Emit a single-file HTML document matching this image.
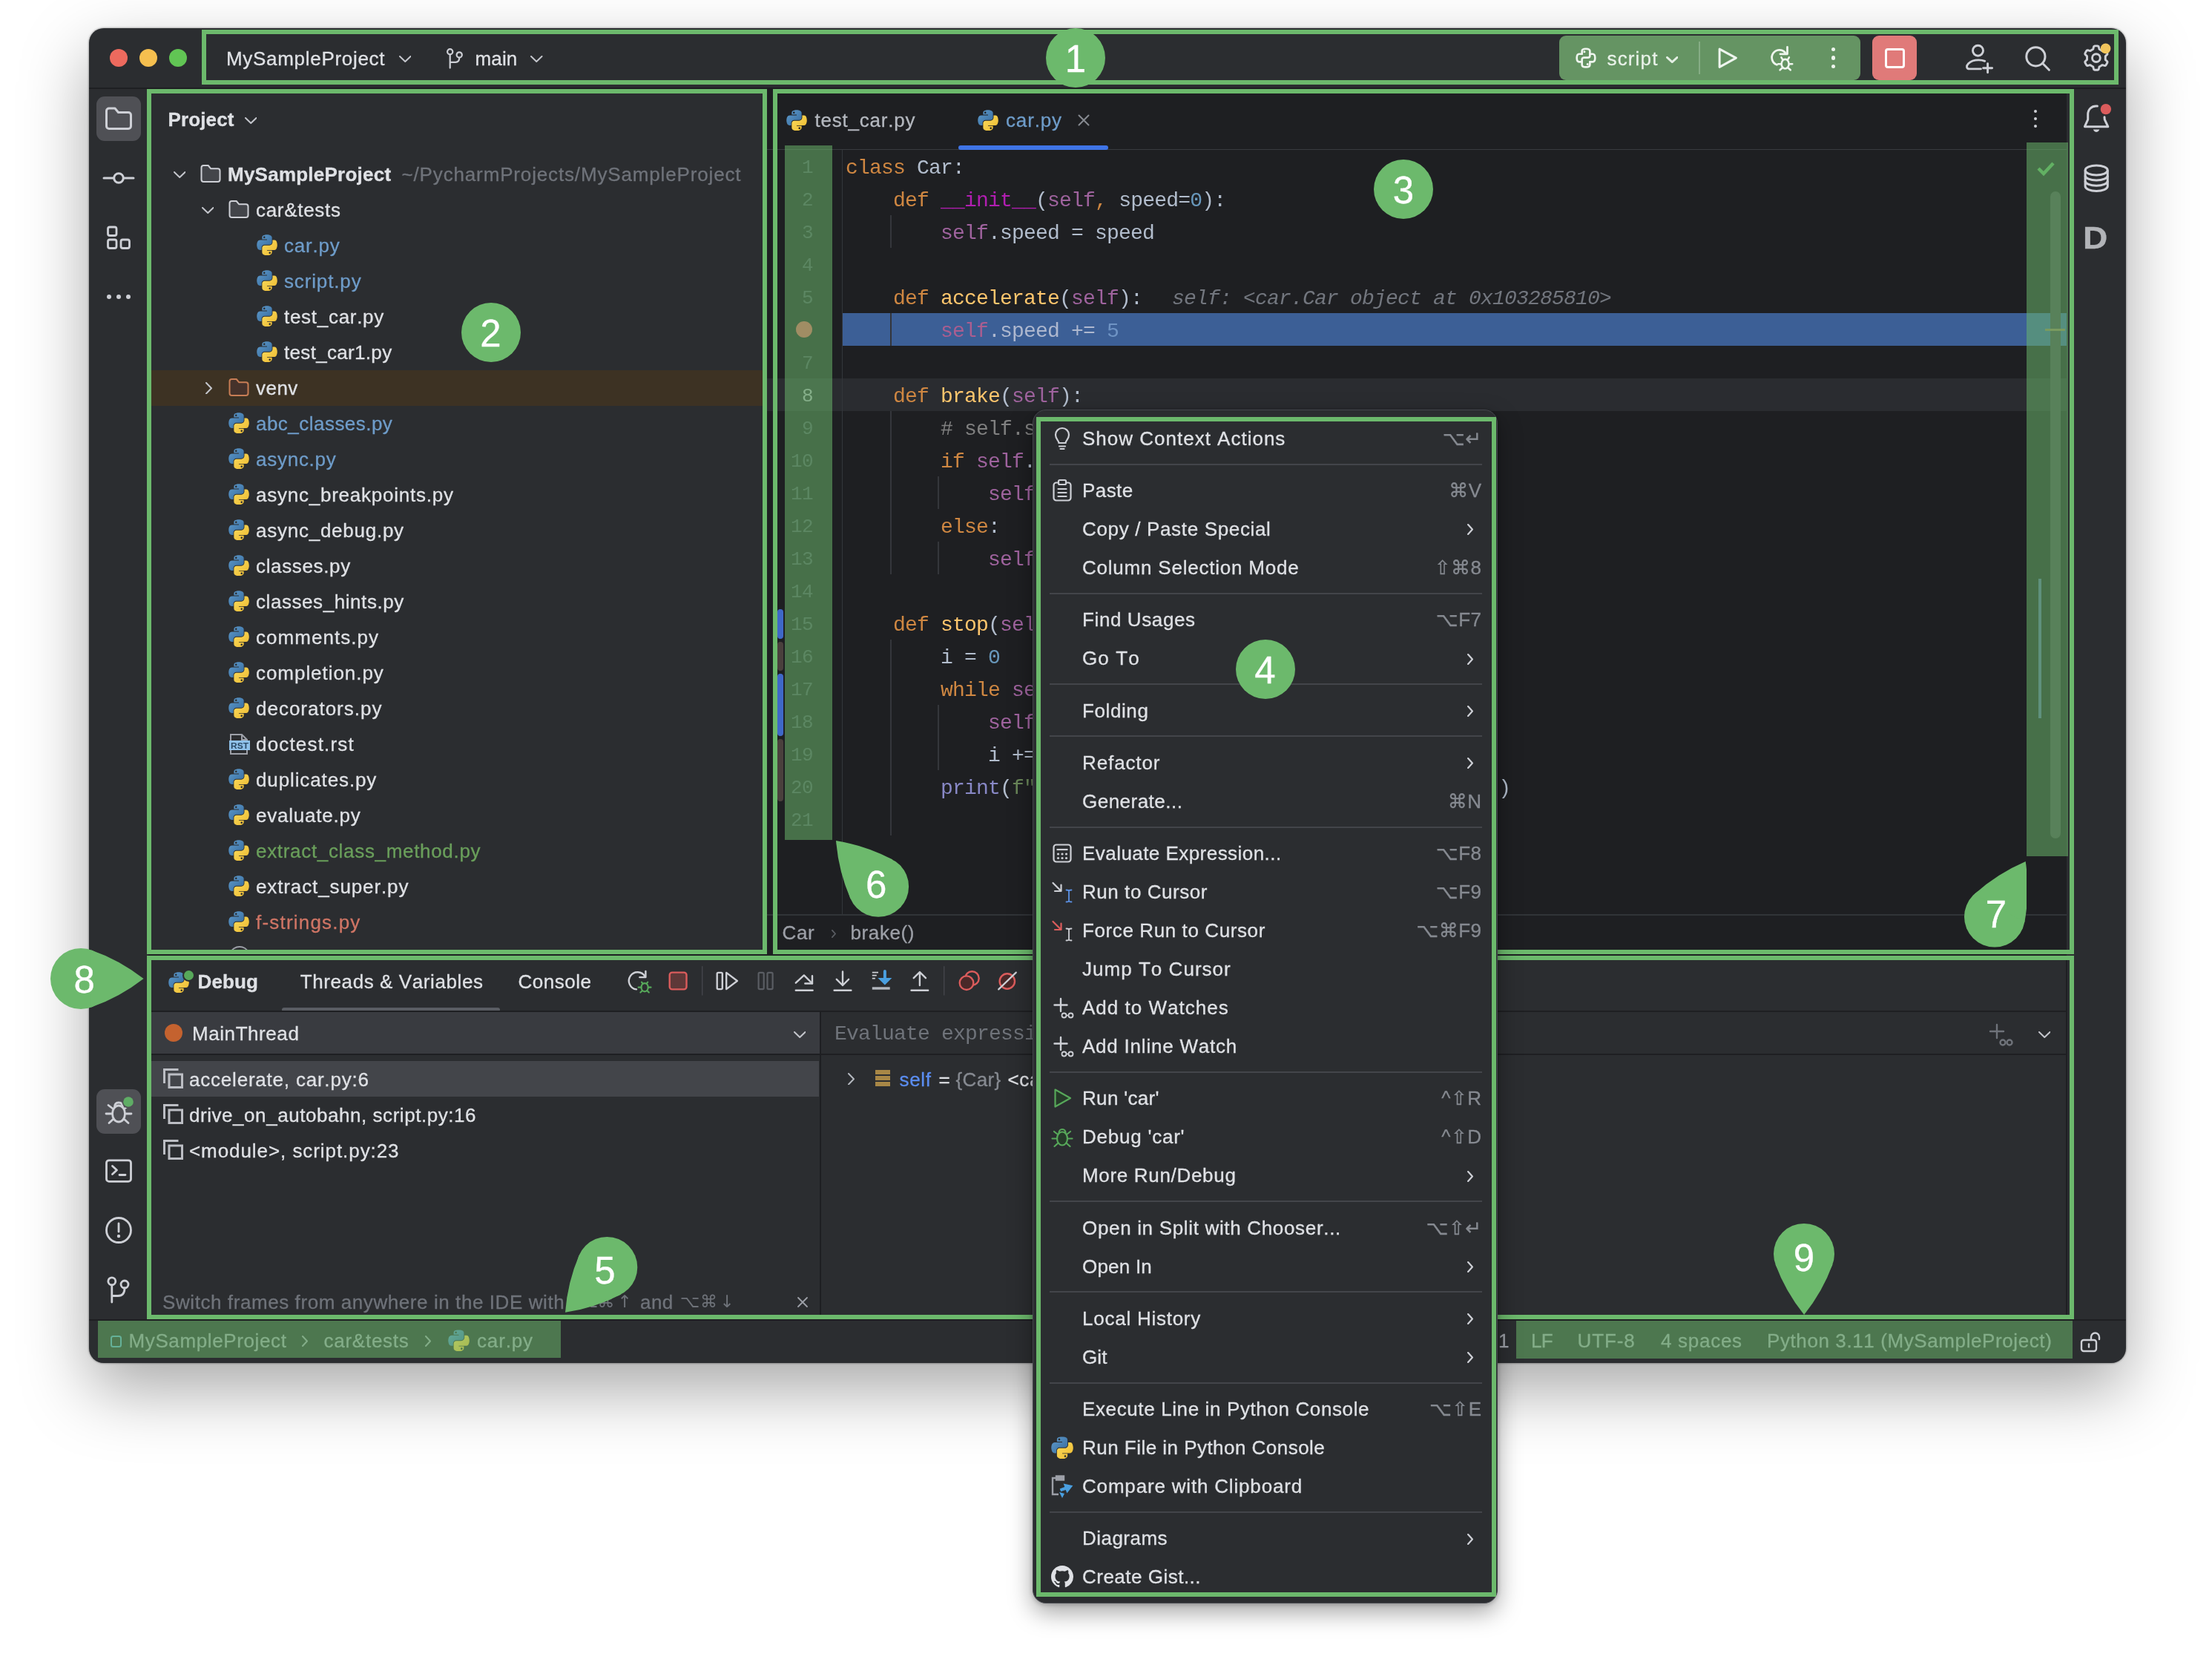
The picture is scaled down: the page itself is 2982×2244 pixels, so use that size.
<!DOCTYPE html>
<html><head><meta charset="utf-8"><title>PyCharm UI overview</title>
<style>
html,body{margin:0;padding:0}
body{width:2982px;height:2244px;background:#fff;position:relative;overflow:hidden;font-family:"Liberation Sans",sans-serif;font-kerning:none}
div,svg{position:absolute;box-sizing:border-box}
.t{white-space:pre;-webkit-text-stroke-width:0.3px}
.m{white-space:pre;font-family:"Liberation Mono",monospace}
.gb{border:6px solid #6cb96c}
.code{white-space:pre;font-family:"Liberation Mono",monospace;font-size:28px;letter-spacing:-0.8px;height:44px;line-height:49px;color:#b2bdcd;left:1140px}
.ln{white-space:pre;font-family:"Liberation Mono",monospace;font-size:26px;letter-spacing:-0.6px;height:44px;line-height:49px;color:#4b5059;text-align:right;width:60px;left:1036px}
.k{color:#cf8742}.f{color:#ffc66d}.s{color:#9f639e}.n{color:#6897bb}.c{color:#808080}.d{color:#b21eb2}.b{color:#8888c6}.g{color:#6a8759}
</style></head><body>
<div id="root" style="left:0;top:0;width:2982px;height:2244px;will-change:transform"><svg width="0" height="0" style="left:0;top:0"><defs><linearGradient id="pb" x1="0" y1="0" x2="1" y2="1"><stop offset="0" stop-color="#5f9ccd"/><stop offset="1" stop-color="#35699c"/></linearGradient><linearGradient id="py" x1="0" y1="0" x2="1" y2="1"><stop offset="0" stop-color="#fbdc5e"/><stop offset="1" stop-color="#ecb92f"/></linearGradient></defs></svg><div style="left:120px;top:38px;width:2746px;height:1799px;background:#2b2d30;border-radius:20px;box-shadow:0 36px 90px rgba(0,0,0,.34),0 0 3px rgba(0,0,0,.55);"></div><div style="left:120px;top:118px;width:2746px;height:2px;background:#1e1f22;"></div><div style="left:148px;top:66px;width:24px;height:24px;background:#ed6a5e;border-radius:50%;"></div><div style="left:188px;top:66px;width:24px;height:24px;background:#f5bf4f;border-radius:50%;"></div><div style="left:228px;top:66px;width:24px;height:24px;background:#61c554;border-radius:50%;"></div><div class="t" style="top:61.0px;height:36px;line-height:36px;font-size:26px;color:#dfe1e5;letter-spacing:0.70px;left:305px;">MySampleProject</div><svg style="left:537.75px;top:74.5px;" width="16.5" height="9" viewBox="0 0 16.5 9"><path d="M1.0 1.0 L8.25 8.0 L15.5 1.0" fill="none" stroke="#c4c6cc" stroke-width="2.0" stroke-linecap="round" stroke-linejoin="round"/></svg><svg style="left:600px;top:62px;" width="26" height="32" viewBox="0 0 26 32"><g fill="none" stroke="#ced0d6" stroke-width="2.2" stroke-linecap="round"><circle cx="6.700" cy="7.800" r="3.600"/><circle cx="19.200" cy="11.900" r="3.600"/><path d="M6.700 11.700V29.600M19.200 15.800c0 4.500-1.500 6-5 6H6.700"/></g></svg><div class="t" style="top:61.0px;height:36px;line-height:36px;font-size:26px;color:#dfe1e5;letter-spacing:0.16px;left:640.5px;">main</div><svg style="left:715.25px;top:74.5px;" width="16.5" height="9" viewBox="0 0 16.5 9"><path d="M1.0 1.0 L8.25 8.0 L15.5 1.0" fill="none" stroke="#c4c6cc" stroke-width="2.0" stroke-linecap="round" stroke-linejoin="round"/></svg><div style="left:2102px;top:48px;width:406px;height:60px;background:#659463;border-radius:9px;"></div><svg style="left:2100px;top:44px;" width="760" height="70" viewBox="0 0 760 70"><g transform="translate(23.0 19.1) scale(1.0714)" fill="none" stroke="#eef5ee" stroke-width="2.5" stroke-linejoin="round" stroke-linecap="round"><path d="M9 9V5.5C9 3.5 10.5 2.5 14 2.5s5 1 5 3V11c0 1.6-1.2 2.5-2.6 2.5H11.600C10.200 13.500 9 14.600 9 16v6.500c0 2 1.500 3 5 3s5-1 5-3V19"/><path d="M9 9H5.500c-2 0-3 1.500-3 5s1 5 3 5H9M19 19h3.500c2 0 3-1.500 3-5s-1-5-3-5H19"/><path d="M12 6.200h.1M16 21.800h.1" stroke-width="2.8"/></g><path d="M218.1 22.1L240.4 34.1L218.1 46.4z" fill="none" stroke="#eef5ee" stroke-width="3" stroke-linejoin="round"/><g fill="none" stroke="#eef5ee" stroke-width="2.8" stroke-linecap="round" stroke-linejoin="round"><path d="M306.6 27.0A10.2 10.2 0 1 0 295.4 43.2"/><path d="M309.5 19.3L309.5 28.8L299.9 28.8"/></g><g fill="none" stroke="#eef5ee" stroke-width="2.6" stroke-linecap="round"><ellipse cx="306.6" cy="42.2" rx="5" ry="6.3"/><path d="M303.1 36.2L301.4 33.4M310.2 36.2L311.9 33.4M301.0 42.2L297.1 42.2M312.3 42.2L316.2 42.2M302.4 47.8L299.6 50.3M310.9 47.8L313.7 50.3"/></g><g fill="none" stroke="#ced0d6" stroke-width="2.9" stroke-linecap="round" stroke-linejoin="round"><circle cx="566.5" cy="24.2" r="7"/><path d="M570.4 48.9L555.2 48.9C550.6 48.9 550.6 44.7 553.5 41.8C557.0 38.3 561.2 36.9 567.2 36.9C570.7 36.9 573.2 37.3 575.7 38.3"/><path d="M579.6 41.8L579.6 53.8M573.6 47.8L585.6 47.8"/></g><g fill="none" stroke="#ced0d6" stroke-width="3" stroke-linecap="round"><circle cx="644.4" cy="32.3" r="12.6"/><path d="M654.0 41.8L662.4 50.3"/></g><path d="M739.9 42.2L739.4 43.1L738.8 44.0L737.9 44.6L736.0 44.2L734.3 43.6L733.4 43.9L732.8 44.4L732.1 44.8L731.4 45.2L730.6 45.6L730.0 46.1L729.6 47.9L729.0 49.7L728.0 50.2L727.0 50.3L725.9 50.3L724.8 50.3L723.8 50.2L722.8 49.7L722.2 47.9L721.8 46.1L721.2 45.6L720.4 45.2L719.7 44.8L719.0 44.4L718.4 43.9L717.5 43.6L715.8 44.2L713.9 44.6L713.0 44.0L712.4 43.1L711.9 42.2L711.4 41.3L710.9 40.3L710.8 39.2L712.1 37.8L713.4 36.6L713.6 35.7L713.5 34.9L713.5 34.1L713.5 33.3L713.6 32.5L713.4 31.6L712.1 30.4L710.8 29.0L710.9 27.9L711.4 26.9L711.9 26.0L712.4 25.1L713.0 24.2L713.9 23.6L715.8 24.0L717.5 24.6L718.4 24.3L719.0 23.8L719.7 23.4L720.4 23.0L721.2 22.6L721.8 22.1L722.2 20.3L722.8 18.5L723.8 18.0L724.8 17.9L725.9 17.9L727.0 17.9L728.0 18.0L729.0 18.5L729.6 20.3L730.0 22.1L730.6 22.6L731.4 23.0L732.1 23.4L732.8 23.8L733.4 24.3L734.3 24.6L736.0 24.0L737.9 23.6L738.8 24.2L739.4 25.1L739.9 26.0L740.4 26.9L740.9 27.9L741.0 29.0L739.7 30.4L738.4 31.6L738.2 32.5L738.3 33.3L738.3 34.1L738.3 34.9L738.2 35.7L738.4 36.6L739.7 37.8L741.0 39.2L740.9 40.3L740.4 41.3z" fill="none" stroke="#ced0d6" stroke-width="2.9" stroke-linejoin="round"/><circle cx="725.9" cy="34.1" r="5.4" fill="none" stroke="#ced0d6" stroke-width="2.9"/><circle cx="738.6" cy="21.4" r="6.8" fill="#f2c55c"/></svg><div class="t" style="top:61.0px;height:36px;line-height:36px;font-size:26px;color:#e9f2e9;letter-spacing:1.15px;left:2166.5px;">script</div><svg style="left:2245.75px;top:75.5px;" width="16.5" height="9" viewBox="0 0 16.5 9"><path d="M1.4 1.4 L8.25 7.6 L15.1 1.4" fill="none" stroke="#e4efe4" stroke-width="2.8" stroke-linecap="round" stroke-linejoin="round"/></svg><div style="left:2290px;top:56px;width:2px;height:44px;background:#86ad85;"></div><div style="left:2469.3px;top:63.6px;width:5.2px;height:5.2px;background:#eef5ee;border-radius:50%;"></div><div style="left:2469.3px;top:75.4px;width:5.2px;height:5.2px;background:#eef5ee;border-radius:50%;"></div><div style="left:2469.3px;top:87.2px;width:5.2px;height:5.2px;background:#eef5ee;border-radius:50%;"></div><div style="left:2524px;top:48px;width:60px;height:60px;background:#e07a79;border-radius:9px;"></div><div style="left:2540.5px;top:64.5px;width:27.5px;height:27px;border:3.2px solid #fff;border-radius:4px;"></div><div style="left:130px;top:130px;width:60px;height:60px;background:#4f5055;border-radius:11px;"></div><svg style="left:140px;top:143px;" width="40" height="34" viewBox="0 0 40 34"><path d="M3.500 6.500c0-2 1.500-3.500 3.500-3.500h8l4.500 5.500H33c2 0 3.500 1.500 3.500 3.500v15c0 2-1.500 3.500-3.500 3.500H7c-2 0-3.500-1.500-3.500-3.500z" fill="none" stroke="#ced0d6" stroke-width="3" stroke-linejoin="round"/></svg><svg style="left:138px;top:228px;" width="44" height="24" viewBox="0 0 44 24"><g fill="none" stroke="#ced0d6" stroke-width="3" stroke-linecap="round"><circle cx="22" cy="12" r="6.300"/><path d="M2 12h13.500M28.500 12H42"/></g></svg><svg style="left:142px;top:302px;" width="36" height="36" viewBox="0 0 36 36"><g fill="none" stroke="#ced0d6" stroke-width="2.800"><rect x="3.500" y="4" width="11.500" height="11.500" rx="2.500"/><rect x="3.500" y="21" width="11.500" height="11.500" rx="2.500"/><rect x="21" y="21" width="11.500" height="11.500" rx="2.500"/></g></svg><div style="left:144px;top:397px;width:6px;height:6px;background:#ced0d6;border-radius:50%;"></div><div style="left:157px;top:397px;width:6px;height:6px;background:#ced0d6;border-radius:50%;"></div><div style="left:170px;top:397px;width:6px;height:6px;background:#ced0d6;border-radius:50%;"></div><div style="left:130px;top:1468px;width:60px;height:60px;background:#4f5055;border-radius:11px;"></div><svg style="left:138px;top:1476px;" width="44" height="44" viewBox="0 0 44 44"><g fill="none" stroke="#ced0d6" stroke-width="2.800" stroke-linecap="round" stroke-linejoin="round"><ellipse cx="22" cy="25" rx="8.500" ry="11"/><path d="M16.500 16.500C16.500 12 19 10 22 10s5.500 2 5.500 6.500"/><path d="M13.500 25H5M30.500 25H39M14.500 18.500L8 13.500M29.500 18.500l4-3M15 32l-6 5.500M29 32l6 5.500"/></g><circle cx="35" cy="9" r="8.6" fill="#4f5055"/><circle cx="35" cy="9" r="6.8" fill="#5fad65"/></svg><svg style="left:140px;top:1558px;" width="40" height="40" viewBox="0 0 40 40"><g fill="none" stroke="#ced0d6" stroke-width="2.800" stroke-linecap="round" stroke-linejoin="round"><rect x="3.500" y="5.800" width="33" height="28.600" rx="3.500"/><path d="M11.500 13.500l6 5.500-6 5.500M21 25.500h8"/></g></svg><svg style="left:140px;top:1638px;" width="40" height="40" viewBox="0 0 40 40"><g fill="none" stroke="#ced0d6" stroke-width="2.800" stroke-linecap="round"><circle cx="20" cy="20" r="16.500"/><path d="M20 11v11"/></g><circle cx="20" cy="28" r="2.200" fill="#ced0d6"/></svg><svg style="left:142px;top:1716px;" width="36" height="42" viewBox="0 0 36 42"><g fill="none" stroke="#ced0d6" stroke-width="2.800" stroke-linecap="round"><circle cx="8.800" cy="10.800" r="5"/><circle cx="26" cy="15" r="5"/><path d="M8.800 16v23M26 20c0 8-4 10.500-9 10.500H8.800"/></g></svg><div class="t" style="top:143.0px;height:36px;line-height:36px;font-size:26px;color:#dfe1e5;letter-spacing:0.12px;font-weight:700;left:226.5px;">Project</div><svg style="left:329.75px;top:157.5px;" width="16.5" height="9" viewBox="0 0 16.5 9"><path d="M1.0 1.0 L8.25 8.0 L15.5 1.0" fill="none" stroke="#c4c6cc" stroke-width="2.0" stroke-linecap="round" stroke-linejoin="round"/></svg><svg style="left:233.75px;top:230.5px;" width="16.5" height="9" viewBox="0 0 16.5 9"><path d="M1.0 1.0 L8.25 8.0 L15.5 1.0" fill="none" stroke="#c4c6cc" stroke-width="2.0" stroke-linecap="round" stroke-linejoin="round"/></svg><svg style="left:270px;top:221px;" width="28" height="26" viewBox="0 0 28 26"><path d="M1.500 5c0-1.700 1.300-3 3-3h6.200l3.600 4.300h9.200c1.700 0 3 1.300 3 3V21c0 1.700-1.300 3-3 3h-19c-1.700 0-3-1.300-3-3z" fill="#43454a" stroke="#ced0d6" stroke-width="2" stroke-linejoin="round"/></svg><div class="t" style="top:217.0px;height:36px;line-height:36px;font-size:26px;color:#dfe1e5;letter-spacing:0.24px;font-weight:700;left:307px;">MySampleProject</div><div class="t" style="top:217.0px;height:36px;line-height:36px;font-size:26px;color:#6f737a;letter-spacing:0.85px;left:541.5px;">~/PycharmProjects/MySampleProject</div><svg style="left:271.75px;top:278.5px;" width="16.5" height="9" viewBox="0 0 16.5 9"><path d="M1.0 1.0 L8.25 8.0 L15.5 1.0" fill="none" stroke="#c4c6cc" stroke-width="2.0" stroke-linecap="round" stroke-linejoin="round"/></svg><svg style="left:308px;top:269px;" width="28" height="26" viewBox="0 0 28 26"><path d="M1.500 5c0-1.700 1.300-3 3-3h6.200l3.600 4.300h9.200c1.700 0 3 1.300 3 3V21c0 1.700-1.300 3-3 3h-19c-1.700 0-3-1.300-3-3z" fill="#43454a" stroke="#ced0d6" stroke-width="2" stroke-linejoin="round"/></svg><div class="t" style="top:265.0px;height:36px;line-height:36px;font-size:26px;color:#dfe1e5;letter-spacing:0.69px;left:345px;">car&amp;tests</div><svg style="left:346.0px;top:316.0px;" width="28" height="28" viewBox="-1 -1 113 112"><path fill="url(#pb)" d="M54.9 0C50.3 0 46 .4 42.1 1.1 30.8 3.1 28.7 7.3 28.7 15v10.2h26.8v3.4H18.7c-7.8 0-14.6 4.7-16.7 13.6-2.5 10.2-2.6 16.6 0 27.2 1.9 7.9 6.4 13.6 14.2 13.6h9.2V70.7c0-8.8 7.6-16.6 16.7-16.6h26.8c7.4 0 13.4-6.1 13.4-13.6V15c0-7.3-6.1-12.7-13.4-13.9C64.3.3 59.5 0 54.9 0zM40.4 8.2c2.8 0 5 2.3 5 5.1s-2.3 5.1-5 5.1c-2.8 0-5-2.3-5-5.1s2.3-5.1 5-5.1z"/><path fill="url(#py)" d="M85.6 28.7v11.9c0 9.2-7.8 17-16.7 17H42.1c-7.3 0-13.4 6.3-13.4 13.6v25.5c0 7.3 6.3 11.5 13.4 13.6 8.5 2.5 16.6 2.9 26.8 0 6.7-2 13.4-5.9 13.4-13.6V86.5H55.5v-3.4h40.2c7.8 0 10.7-5.4 13.4-13.6 2.8-8.4 2.7-16.5 0-27.2-1.9-7.7-5.6-13.6-13.4-13.6H85.6zM70.5 93.3c2.8 0 5 2.3 5 5.1s-2.3 5.1-5 5.1c-2.8 0-5-2.3-5-5.1s2.3-5.1 5-5.1z"/></svg><div class="t" style="top:313.0px;height:36px;line-height:36px;font-size:26px;color:#6e9cc9;letter-spacing:0.79px;left:383px;">car.py</div><svg style="left:346.0px;top:364.0px;" width="28" height="28" viewBox="-1 -1 113 112"><path fill="url(#pb)" d="M54.9 0C50.3 0 46 .4 42.1 1.1 30.8 3.1 28.7 7.3 28.7 15v10.2h26.8v3.4H18.7c-7.8 0-14.6 4.7-16.7 13.6-2.5 10.2-2.6 16.6 0 27.2 1.9 7.9 6.4 13.6 14.2 13.6h9.2V70.7c0-8.8 7.6-16.6 16.7-16.6h26.8c7.4 0 13.4-6.1 13.4-13.6V15c0-7.3-6.1-12.7-13.4-13.9C64.3.3 59.5 0 54.9 0zM40.4 8.2c2.8 0 5 2.3 5 5.1s-2.3 5.1-5 5.1c-2.8 0-5-2.3-5-5.1s2.3-5.1 5-5.1z"/><path fill="url(#py)" d="M85.6 28.7v11.9c0 9.2-7.8 17-16.7 17H42.1c-7.3 0-13.4 6.3-13.4 13.6v25.5c0 7.3 6.3 11.5 13.4 13.6 8.5 2.5 16.6 2.9 26.8 0 6.7-2 13.4-5.9 13.4-13.6V86.5H55.5v-3.4h40.2c7.8 0 10.7-5.4 13.4-13.6 2.8-8.4 2.7-16.5 0-27.2-1.9-7.7-5.6-13.6-13.4-13.6H85.6zM70.5 93.3c2.8 0 5 2.3 5 5.1s-2.3 5.1-5 5.1c-2.8 0-5-2.3-5-5.1s2.3-5.1 5-5.1z"/></svg><div class="t" style="top:361.0px;height:36px;line-height:36px;font-size:26px;color:#6e9cc9;letter-spacing:0.86px;left:383px;">script.py</div><svg style="left:346.0px;top:412.0px;" width="28" height="28" viewBox="-1 -1 113 112"><path fill="url(#pb)" d="M54.9 0C50.3 0 46 .4 42.1 1.1 30.8 3.1 28.7 7.3 28.7 15v10.2h26.8v3.4H18.7c-7.8 0-14.6 4.7-16.7 13.6-2.5 10.2-2.6 16.6 0 27.2 1.9 7.9 6.4 13.6 14.2 13.6h9.2V70.7c0-8.8 7.6-16.6 16.7-16.6h26.8c7.4 0 13.4-6.1 13.4-13.6V15c0-7.3-6.1-12.7-13.4-13.9C64.3.3 59.5 0 54.9 0zM40.4 8.2c2.8 0 5 2.3 5 5.1s-2.3 5.1-5 5.1c-2.8 0-5-2.3-5-5.1s2.3-5.1 5-5.1z"/><path fill="url(#py)" d="M85.6 28.7v11.9c0 9.2-7.8 17-16.7 17H42.1c-7.3 0-13.4 6.3-13.4 13.6v25.5c0 7.3 6.3 11.5 13.4 13.6 8.5 2.5 16.6 2.9 26.8 0 6.7-2 13.4-5.9 13.4-13.6V86.5H55.5v-3.4h40.2c7.8 0 10.7-5.4 13.4-13.6 2.8-8.4 2.7-16.5 0-27.2-1.9-7.7-5.6-13.6-13.4-13.6H85.6zM70.5 93.3c2.8 0 5 2.3 5 5.1s-2.3 5.1-5 5.1c-2.8 0-5-2.3-5-5.1s2.3-5.1 5-5.1z"/></svg><div class="t" style="top:409.0px;height:36px;line-height:36px;font-size:26px;color:#dfe1e5;letter-spacing:0.71px;left:383px;">test_car.py</div><svg style="left:346.0px;top:460.0px;" width="28" height="28" viewBox="-1 -1 113 112"><path fill="url(#pb)" d="M54.9 0C50.3 0 46 .4 42.1 1.1 30.8 3.1 28.7 7.3 28.7 15v10.2h26.8v3.4H18.7c-7.8 0-14.6 4.7-16.7 13.6-2.5 10.2-2.6 16.6 0 27.2 1.9 7.9 6.4 13.6 14.2 13.6h9.2V70.7c0-8.8 7.6-16.6 16.7-16.6h26.8c7.4 0 13.4-6.1 13.4-13.6V15c0-7.3-6.1-12.7-13.4-13.9C64.3.3 59.5 0 54.9 0zM40.4 8.2c2.8 0 5 2.3 5 5.1s-2.3 5.1-5 5.1c-2.8 0-5-2.3-5-5.1s2.3-5.1 5-5.1z"/><path fill="url(#py)" d="M85.6 28.7v11.9c0 9.2-7.8 17-16.7 17H42.1c-7.3 0-13.4 6.3-13.4 13.6v25.5c0 7.3 6.3 11.5 13.4 13.6 8.5 2.5 16.6 2.9 26.8 0 6.7-2 13.4-5.9 13.4-13.6V86.5H55.5v-3.4h40.2c7.8 0 10.7-5.4 13.4-13.6 2.8-8.4 2.7-16.5 0-27.2-1.9-7.7-5.6-13.6-13.4-13.6H85.6zM70.5 93.3c2.8 0 5 2.3 5 5.1s-2.3 5.1-5 5.1c-2.8 0-5-2.3-5-5.1s2.3-5.1 5-5.1z"/></svg><div class="t" style="top:457.0px;height:36px;line-height:36px;font-size:26px;color:#dfe1e5;letter-spacing:0.32px;left:383px;">test_car1.py</div><div style="left:204px;top:499px;width:824px;height:48px;background:#3d3223;"></div><svg style="left:276.5px;top:514.75px;" width="9" height="16.5" viewBox="0 0 9 16.5"><path d="M1.0 1.0 L8.0 8.25 L1.0 15.5" fill="none" stroke="#c4c6cc" stroke-width="2.0" stroke-linecap="round" stroke-linejoin="round"/></svg><svg style="left:308px;top:509px;" width="28" height="26" viewBox="0 0 28 26"><path d="M1.500 5c0-1.700 1.300-3 3-3h6.200l3.600 4.300h9.200c1.700 0 3 1.300 3 3V21c0 1.700-1.300 3-3 3h-19c-1.700 0-3-1.300-3-3z" fill="#45322b" stroke="#c77d55" stroke-width="2" stroke-linejoin="round"/></svg><div class="t" style="top:505.0px;height:36px;line-height:36px;font-size:26px;color:#dfe1e5;letter-spacing:0.47px;left:345px;">venv</div><svg style="left:308.0px;top:556.0px;" width="28" height="28" viewBox="-1 -1 113 112"><path fill="url(#pb)" d="M54.9 0C50.3 0 46 .4 42.1 1.1 30.8 3.1 28.7 7.3 28.7 15v10.2h26.8v3.4H18.7c-7.8 0-14.6 4.7-16.7 13.6-2.5 10.2-2.6 16.6 0 27.2 1.9 7.9 6.4 13.6 14.2 13.6h9.2V70.7c0-8.8 7.6-16.6 16.7-16.6h26.8c7.4 0 13.4-6.1 13.4-13.6V15c0-7.3-6.1-12.7-13.4-13.9C64.3.3 59.5 0 54.9 0zM40.4 8.2c2.8 0 5 2.3 5 5.1s-2.3 5.1-5 5.1c-2.8 0-5-2.3-5-5.1s2.3-5.1 5-5.1z"/><path fill="url(#py)" d="M85.6 28.7v11.9c0 9.2-7.8 17-16.7 17H42.1c-7.3 0-13.4 6.3-13.4 13.6v25.5c0 7.3 6.3 11.5 13.4 13.6 8.5 2.5 16.6 2.9 26.8 0 6.7-2 13.4-5.9 13.4-13.6V86.5H55.5v-3.4h40.2c7.8 0 10.7-5.4 13.4-13.6 2.8-8.4 2.7-16.5 0-27.2-1.9-7.7-5.6-13.6-13.4-13.6H85.6zM70.5 93.3c2.8 0 5 2.3 5 5.1s-2.3 5.1-5 5.1c-2.8 0-5-2.3-5-5.1s2.3-5.1 5-5.1z"/></svg><div class="t" style="top:553.0px;height:36px;line-height:36px;font-size:26px;color:#6e9cc9;letter-spacing:0.47px;left:345px;">abc_classes.py</div><svg style="left:308.0px;top:604.0px;" width="28" height="28" viewBox="-1 -1 113 112"><path fill="url(#pb)" d="M54.9 0C50.3 0 46 .4 42.1 1.1 30.8 3.1 28.7 7.3 28.7 15v10.2h26.8v3.4H18.7c-7.8 0-14.6 4.7-16.7 13.6-2.5 10.2-2.6 16.6 0 27.2 1.9 7.9 6.4 13.6 14.2 13.6h9.2V70.7c0-8.8 7.6-16.6 16.7-16.6h26.8c7.4 0 13.4-6.1 13.4-13.6V15c0-7.3-6.1-12.7-13.4-13.9C64.3.3 59.5 0 54.9 0zM40.4 8.2c2.8 0 5 2.3 5 5.1s-2.3 5.1-5 5.1c-2.8 0-5-2.3-5-5.1s2.3-5.1 5-5.1z"/><path fill="url(#py)" d="M85.6 28.7v11.9c0 9.2-7.8 17-16.7 17H42.1c-7.3 0-13.4 6.3-13.4 13.6v25.5c0 7.3 6.3 11.5 13.4 13.6 8.5 2.5 16.6 2.9 26.8 0 6.7-2 13.4-5.9 13.4-13.6V86.5H55.5v-3.4h40.2c7.8 0 10.7-5.4 13.4-13.6 2.8-8.4 2.7-16.5 0-27.2-1.9-7.7-5.6-13.6-13.4-13.6H85.6zM70.5 93.3c2.8 0 5 2.3 5 5.1s-2.3 5.1-5 5.1c-2.8 0-5-2.3-5-5.1s2.3-5.1 5-5.1z"/></svg><div class="t" style="top:601.0px;height:36px;line-height:36px;font-size:26px;color:#6e9cc9;letter-spacing:0.74px;left:345px;">async.py</div><svg style="left:308.0px;top:652.0px;" width="28" height="28" viewBox="-1 -1 113 112"><path fill="url(#pb)" d="M54.9 0C50.3 0 46 .4 42.1 1.1 30.8 3.1 28.7 7.3 28.7 15v10.2h26.8v3.4H18.7c-7.8 0-14.6 4.7-16.7 13.6-2.5 10.2-2.6 16.6 0 27.2 1.9 7.9 6.4 13.6 14.2 13.6h9.2V70.7c0-8.8 7.6-16.6 16.7-16.6h26.8c7.4 0 13.4-6.1 13.4-13.6V15c0-7.3-6.1-12.7-13.4-13.9C64.3.3 59.5 0 54.9 0zM40.4 8.2c2.8 0 5 2.3 5 5.1s-2.3 5.1-5 5.1c-2.8 0-5-2.3-5-5.1s2.3-5.1 5-5.1z"/><path fill="url(#py)" d="M85.6 28.7v11.9c0 9.2-7.8 17-16.7 17H42.1c-7.3 0-13.4 6.3-13.4 13.6v25.5c0 7.3 6.3 11.5 13.4 13.6 8.5 2.5 16.6 2.9 26.8 0 6.7-2 13.4-5.9 13.4-13.6V86.5H55.5v-3.4h40.2c7.8 0 10.7-5.4 13.4-13.6 2.8-8.4 2.7-16.5 0-27.2-1.9-7.7-5.6-13.6-13.4-13.6H85.6zM70.5 93.3c2.8 0 5 2.3 5 5.1s-2.3 5.1-5 5.1c-2.8 0-5-2.3-5-5.1s2.3-5.1 5-5.1z"/></svg><div class="t" style="top:649.0px;height:36px;line-height:36px;font-size:26px;color:#dfe1e5;letter-spacing:0.76px;left:345px;">async_breakpoints.py</div><svg style="left:308.0px;top:700.0px;" width="28" height="28" viewBox="-1 -1 113 112"><path fill="url(#pb)" d="M54.9 0C50.3 0 46 .4 42.1 1.1 30.8 3.1 28.7 7.3 28.7 15v10.2h26.8v3.4H18.7c-7.8 0-14.6 4.7-16.7 13.6-2.5 10.2-2.6 16.6 0 27.2 1.9 7.9 6.4 13.6 14.2 13.6h9.2V70.7c0-8.8 7.6-16.6 16.7-16.6h26.8c7.4 0 13.4-6.1 13.4-13.6V15c0-7.3-6.1-12.7-13.4-13.9C64.3.3 59.5 0 54.9 0zM40.4 8.2c2.8 0 5 2.3 5 5.1s-2.3 5.1-5 5.1c-2.8 0-5-2.3-5-5.1s2.3-5.1 5-5.1z"/><path fill="url(#py)" d="M85.6 28.7v11.9c0 9.2-7.8 17-16.7 17H42.1c-7.3 0-13.4 6.3-13.4 13.6v25.5c0 7.3 6.3 11.5 13.4 13.6 8.5 2.5 16.6 2.9 26.8 0 6.7-2 13.4-5.9 13.4-13.6V86.5H55.5v-3.4h40.2c7.8 0 10.7-5.4 13.4-13.6 2.8-8.4 2.7-16.5 0-27.2-1.9-7.7-5.6-13.6-13.4-13.6H85.6zM70.5 93.3c2.8 0 5 2.3 5 5.1s-2.3 5.1-5 5.1c-2.8 0-5-2.3-5-5.1s2.3-5.1 5-5.1z"/></svg><div class="t" style="top:697.0px;height:36px;line-height:36px;font-size:26px;color:#dfe1e5;letter-spacing:0.75px;left:345px;">async_debug.py</div><svg style="left:308.0px;top:748.0px;" width="28" height="28" viewBox="-1 -1 113 112"><path fill="url(#pb)" d="M54.9 0C50.3 0 46 .4 42.1 1.1 30.8 3.1 28.7 7.3 28.7 15v10.2h26.8v3.4H18.7c-7.8 0-14.6 4.7-16.7 13.6-2.5 10.2-2.6 16.6 0 27.2 1.9 7.9 6.4 13.6 14.2 13.6h9.2V70.7c0-8.8 7.6-16.6 16.7-16.6h26.8c7.4 0 13.4-6.1 13.4-13.6V15c0-7.3-6.1-12.7-13.4-13.9C64.3.3 59.5 0 54.9 0zM40.4 8.2c2.8 0 5 2.3 5 5.1s-2.3 5.1-5 5.1c-2.8 0-5-2.3-5-5.1s2.3-5.1 5-5.1z"/><path fill="url(#py)" d="M85.6 28.7v11.9c0 9.2-7.8 17-16.7 17H42.1c-7.3 0-13.4 6.3-13.4 13.6v25.5c0 7.3 6.3 11.5 13.4 13.6 8.5 2.5 16.6 2.9 26.8 0 6.7-2 13.4-5.9 13.4-13.6V86.5H55.5v-3.4h40.2c7.8 0 10.7-5.4 13.4-13.6 2.8-8.4 2.7-16.5 0-27.2-1.9-7.7-5.6-13.6-13.4-13.6H85.6zM70.5 93.3c2.8 0 5 2.3 5 5.1s-2.3 5.1-5 5.1c-2.8 0-5-2.3-5-5.1s2.3-5.1 5-5.1z"/></svg><div class="t" style="top:745.0px;height:36px;line-height:36px;font-size:26px;color:#dfe1e5;letter-spacing:0.65px;left:345px;">classes.py</div><svg style="left:308.0px;top:796.0px;" width="28" height="28" viewBox="-1 -1 113 112"><path fill="url(#pb)" d="M54.9 0C50.3 0 46 .4 42.1 1.1 30.8 3.1 28.7 7.3 28.7 15v10.2h26.8v3.4H18.7c-7.8 0-14.6 4.7-16.7 13.6-2.5 10.2-2.6 16.6 0 27.2 1.9 7.9 6.4 13.6 14.2 13.6h9.2V70.7c0-8.8 7.6-16.6 16.7-16.6h26.8c7.4 0 13.4-6.1 13.4-13.6V15c0-7.3-6.1-12.7-13.4-13.9C64.3.3 59.5 0 54.9 0zM40.4 8.2c2.8 0 5 2.3 5 5.1s-2.3 5.1-5 5.1c-2.8 0-5-2.3-5-5.1s2.3-5.1 5-5.1z"/><path fill="url(#py)" d="M85.6 28.7v11.9c0 9.2-7.8 17-16.7 17H42.1c-7.3 0-13.4 6.3-13.4 13.6v25.5c0 7.3 6.3 11.5 13.4 13.6 8.5 2.5 16.6 2.9 26.8 0 6.7-2 13.4-5.9 13.4-13.6V86.5H55.5v-3.4h40.2c7.8 0 10.7-5.4 13.4-13.6 2.8-8.4 2.7-16.5 0-27.2-1.9-7.7-5.6-13.6-13.4-13.6H85.6zM70.5 93.3c2.8 0 5 2.3 5 5.1s-2.3 5.1-5 5.1c-2.8 0-5-2.3-5-5.1s2.3-5.1 5-5.1z"/></svg><div class="t" style="top:793.0px;height:36px;line-height:36px;font-size:26px;color:#dfe1e5;letter-spacing:0.57px;left:345px;">classes_hints.py</div><svg style="left:308.0px;top:844.0px;" width="28" height="28" viewBox="-1 -1 113 112"><path fill="url(#pb)" d="M54.9 0C50.3 0 46 .4 42.1 1.1 30.8 3.1 28.7 7.3 28.7 15v10.2h26.8v3.4H18.7c-7.8 0-14.6 4.7-16.7 13.6-2.5 10.2-2.6 16.6 0 27.2 1.9 7.9 6.4 13.6 14.2 13.6h9.2V70.7c0-8.8 7.6-16.6 16.7-16.6h26.8c7.4 0 13.4-6.1 13.4-13.6V15c0-7.3-6.1-12.7-13.4-13.9C64.3.3 59.5 0 54.9 0zM40.4 8.2c2.8 0 5 2.3 5 5.1s-2.3 5.1-5 5.1c-2.8 0-5-2.3-5-5.1s2.3-5.1 5-5.1z"/><path fill="url(#py)" d="M85.6 28.7v11.9c0 9.2-7.8 17-16.7 17H42.1c-7.3 0-13.4 6.3-13.4 13.6v25.5c0 7.3 6.3 11.5 13.4 13.6 8.5 2.5 16.6 2.9 26.8 0 6.7-2 13.4-5.9 13.4-13.6V86.5H55.5v-3.4h40.2c7.8 0 10.7-5.4 13.4-13.6 2.8-8.4 2.7-16.5 0-27.2-1.9-7.7-5.6-13.6-13.4-13.6H85.6zM70.5 93.3c2.8 0 5 2.3 5 5.1s-2.3 5.1-5 5.1c-2.8 0-5-2.3-5-5.1s2.3-5.1 5-5.1z"/></svg><div class="t" style="top:841.0px;height:36px;line-height:36px;font-size:26px;color:#dfe1e5;letter-spacing:1.03px;left:345px;">comments.py</div><svg style="left:308.0px;top:892.0px;" width="28" height="28" viewBox="-1 -1 113 112"><path fill="url(#pb)" d="M54.9 0C50.3 0 46 .4 42.1 1.1 30.8 3.1 28.7 7.3 28.7 15v10.2h26.8v3.4H18.7c-7.8 0-14.6 4.7-16.7 13.6-2.5 10.2-2.6 16.6 0 27.2 1.9 7.9 6.4 13.6 14.2 13.6h9.2V70.7c0-8.8 7.6-16.6 16.7-16.6h26.8c7.4 0 13.4-6.1 13.4-13.6V15c0-7.3-6.1-12.7-13.4-13.9C64.3.3 59.5 0 54.9 0zM40.4 8.2c2.8 0 5 2.3 5 5.1s-2.3 5.1-5 5.1c-2.8 0-5-2.3-5-5.1s2.3-5.1 5-5.1z"/><path fill="url(#py)" d="M85.6 28.7v11.9c0 9.2-7.8 17-16.7 17H42.1c-7.3 0-13.4 6.3-13.4 13.6v25.5c0 7.3 6.3 11.5 13.4 13.6 8.5 2.5 16.6 2.9 26.8 0 6.7-2 13.4-5.9 13.4-13.6V86.5H55.5v-3.4h40.2c7.8 0 10.7-5.4 13.4-13.6 2.8-8.4 2.7-16.5 0-27.2-1.9-7.7-5.6-13.6-13.4-13.6H85.6zM70.5 93.3c2.8 0 5 2.3 5 5.1s-2.3 5.1-5 5.1c-2.8 0-5-2.3-5-5.1s2.3-5.1 5-5.1z"/></svg><div class="t" style="top:889.0px;height:36px;line-height:36px;font-size:26px;color:#dfe1e5;letter-spacing:0.95px;left:345px;">completion.py</div><svg style="left:308.0px;top:940.0px;" width="28" height="28" viewBox="-1 -1 113 112"><path fill="url(#pb)" d="M54.9 0C50.3 0 46 .4 42.1 1.1 30.8 3.1 28.7 7.3 28.7 15v10.2h26.8v3.4H18.7c-7.8 0-14.6 4.7-16.7 13.6-2.5 10.2-2.6 16.6 0 27.2 1.9 7.9 6.4 13.6 14.2 13.6h9.2V70.7c0-8.8 7.6-16.6 16.7-16.6h26.8c7.4 0 13.4-6.1 13.4-13.6V15c0-7.3-6.1-12.7-13.4-13.9C64.3.3 59.5 0 54.9 0zM40.4 8.2c2.8 0 5 2.3 5 5.1s-2.3 5.1-5 5.1c-2.8 0-5-2.3-5-5.1s2.3-5.1 5-5.1z"/><path fill="url(#py)" d="M85.6 28.7v11.9c0 9.2-7.8 17-16.7 17H42.1c-7.3 0-13.4 6.3-13.4 13.6v25.5c0 7.3 6.3 11.5 13.4 13.6 8.5 2.5 16.6 2.9 26.8 0 6.7-2 13.4-5.9 13.4-13.6V86.5H55.5v-3.4h40.2c7.8 0 10.7-5.4 13.4-13.6 2.8-8.4 2.7-16.5 0-27.2-1.9-7.7-5.6-13.6-13.4-13.6H85.6zM70.5 93.3c2.8 0 5 2.3 5 5.1s-2.3 5.1-5 5.1c-2.8 0-5-2.3-5-5.1s2.3-5.1 5-5.1z"/></svg><div class="t" style="top:937.0px;height:36px;line-height:36px;font-size:26px;color:#dfe1e5;letter-spacing:0.99px;left:345px;">decorators.py</div><svg style="left:308px;top:988px;" width="30" height="30" viewBox="0 0 30 30"><path d="M3 2h15l7 7v19H3z" fill="none" stroke="#9da0a8" stroke-width="2"/><path d="M18 2v7h7" fill="none" stroke="#9da0a8" stroke-width="2"/><rect x="1" y="10" width="28" height="13" fill="#8fc1ea"/><text x="15" y="21" font-family="Liberation Sans,sans-serif" font-weight="700" font-size="11.500" text-anchor="middle" fill="#2b4a66" textLength="24" lengthAdjust="spacingAndGlyphs">RST</text></svg><div class="t" style="top:985.0px;height:36px;line-height:36px;font-size:26px;color:#dfe1e5;letter-spacing:1.18px;left:345px;">doctest.rst</div><svg style="left:308.0px;top:1036.0px;" width="28" height="28" viewBox="-1 -1 113 112"><path fill="url(#pb)" d="M54.9 0C50.3 0 46 .4 42.1 1.1 30.8 3.1 28.7 7.3 28.7 15v10.2h26.8v3.4H18.7c-7.8 0-14.6 4.7-16.7 13.6-2.5 10.2-2.6 16.6 0 27.2 1.9 7.9 6.4 13.6 14.2 13.6h9.2V70.7c0-8.8 7.6-16.6 16.7-16.6h26.8c7.4 0 13.4-6.1 13.4-13.6V15c0-7.3-6.1-12.7-13.4-13.9C64.3.3 59.5 0 54.9 0zM40.4 8.2c2.8 0 5 2.3 5 5.1s-2.3 5.1-5 5.1c-2.8 0-5-2.3-5-5.1s2.3-5.1 5-5.1z"/><path fill="url(#py)" d="M85.6 28.7v11.9c0 9.2-7.8 17-16.7 17H42.1c-7.3 0-13.4 6.3-13.4 13.6v25.5c0 7.3 6.3 11.5 13.4 13.6 8.5 2.5 16.6 2.9 26.8 0 6.7-2 13.4-5.9 13.4-13.6V86.5H55.5v-3.4h40.2c7.8 0 10.7-5.4 13.4-13.6 2.8-8.4 2.7-16.5 0-27.2-1.9-7.7-5.6-13.6-13.4-13.6H85.6zM70.5 93.3c2.8 0 5 2.3 5 5.1s-2.3 5.1-5 5.1c-2.8 0-5-2.3-5-5.1s2.3-5.1 5-5.1z"/></svg><div class="t" style="top:1033.0px;height:36px;line-height:36px;font-size:26px;color:#dfe1e5;letter-spacing:0.88px;left:345px;">duplicates.py</div><svg style="left:308.0px;top:1084.0px;" width="28" height="28" viewBox="-1 -1 113 112"><path fill="url(#pb)" d="M54.9 0C50.3 0 46 .4 42.1 1.1 30.8 3.1 28.7 7.3 28.7 15v10.2h26.8v3.4H18.7c-7.8 0-14.6 4.7-16.7 13.6-2.5 10.2-2.6 16.6 0 27.2 1.9 7.9 6.4 13.6 14.2 13.6h9.2V70.7c0-8.8 7.6-16.6 16.7-16.6h26.8c7.4 0 13.4-6.1 13.4-13.6V15c0-7.3-6.1-12.7-13.4-13.9C64.3.3 59.5 0 54.9 0zM40.4 8.2c2.8 0 5 2.3 5 5.1s-2.3 5.1-5 5.1c-2.8 0-5-2.3-5-5.1s2.3-5.1 5-5.1z"/><path fill="url(#py)" d="M85.6 28.7v11.9c0 9.2-7.8 17-16.7 17H42.1c-7.3 0-13.4 6.3-13.4 13.6v25.5c0 7.3 6.3 11.5 13.4 13.6 8.5 2.5 16.6 2.9 26.8 0 6.7-2 13.4-5.9 13.4-13.6V86.5H55.5v-3.4h40.2c7.8 0 10.7-5.4 13.4-13.6 2.8-8.4 2.7-16.5 0-27.2-1.9-7.7-5.6-13.6-13.4-13.6H85.6zM70.5 93.3c2.8 0 5 2.3 5 5.1s-2.3 5.1-5 5.1c-2.8 0-5-2.3-5-5.1s2.3-5.1 5-5.1z"/></svg><div class="t" style="top:1081.0px;height:36px;line-height:36px;font-size:26px;color:#dfe1e5;letter-spacing:0.78px;left:345px;">evaluate.py</div><svg style="left:308.0px;top:1132.0px;" width="28" height="28" viewBox="-1 -1 113 112"><path fill="url(#pb)" d="M54.9 0C50.3 0 46 .4 42.1 1.1 30.8 3.1 28.7 7.3 28.7 15v10.2h26.8v3.4H18.7c-7.8 0-14.6 4.7-16.7 13.6-2.5 10.2-2.6 16.6 0 27.2 1.9 7.9 6.4 13.6 14.2 13.6h9.2V70.7c0-8.8 7.6-16.6 16.7-16.6h26.8c7.4 0 13.4-6.1 13.4-13.6V15c0-7.3-6.1-12.7-13.4-13.9C64.3.3 59.5 0 54.9 0zM40.4 8.2c2.8 0 5 2.3 5 5.1s-2.3 5.1-5 5.1c-2.8 0-5-2.3-5-5.1s2.3-5.1 5-5.1z"/><path fill="url(#py)" d="M85.6 28.7v11.9c0 9.2-7.8 17-16.7 17H42.1c-7.3 0-13.4 6.3-13.4 13.6v25.5c0 7.3 6.3 11.5 13.4 13.6 8.5 2.5 16.6 2.9 26.8 0 6.7-2 13.4-5.9 13.4-13.6V86.5H55.5v-3.4h40.2c7.8 0 10.7-5.4 13.4-13.6 2.8-8.4 2.7-16.5 0-27.2-1.9-7.7-5.6-13.6-13.4-13.6H85.6zM70.5 93.3c2.8 0 5 2.3 5 5.1s-2.3 5.1-5 5.1c-2.8 0-5-2.3-5-5.1s2.3-5.1 5-5.1z"/></svg><div class="t" style="top:1129.0px;height:36px;line-height:36px;font-size:26px;color:#6a9f5b;letter-spacing:0.68px;left:345px;">extract_class_method.py</div><svg style="left:308.0px;top:1180.0px;" width="28" height="28" viewBox="-1 -1 113 112"><path fill="url(#pb)" d="M54.9 0C50.3 0 46 .4 42.1 1.1 30.8 3.1 28.7 7.3 28.7 15v10.2h26.8v3.4H18.7c-7.8 0-14.6 4.7-16.7 13.6-2.5 10.2-2.6 16.6 0 27.2 1.9 7.9 6.4 13.6 14.2 13.6h9.2V70.7c0-8.8 7.6-16.6 16.7-16.6h26.8c7.4 0 13.4-6.1 13.4-13.6V15c0-7.3-6.1-12.7-13.4-13.9C64.3.3 59.5 0 54.9 0zM40.4 8.2c2.8 0 5 2.3 5 5.1s-2.3 5.1-5 5.1c-2.8 0-5-2.3-5-5.1s2.3-5.1 5-5.1z"/><path fill="url(#py)" d="M85.6 28.7v11.9c0 9.2-7.8 17-16.7 17H42.1c-7.3 0-13.4 6.3-13.4 13.6v25.5c0 7.3 6.3 11.5 13.4 13.6 8.5 2.5 16.6 2.9 26.8 0 6.7-2 13.4-5.9 13.4-13.6V86.5H55.5v-3.4h40.2c7.8 0 10.7-5.4 13.4-13.6 2.8-8.4 2.7-16.5 0-27.2-1.9-7.7-5.6-13.6-13.4-13.6H85.6zM70.5 93.3c2.8 0 5 2.3 5 5.1s-2.3 5.1-5 5.1c-2.8 0-5-2.3-5-5.1s2.3-5.1 5-5.1z"/></svg><div class="t" style="top:1177.0px;height:36px;line-height:36px;font-size:26px;color:#dfe1e5;letter-spacing:0.88px;left:345px;">extract_super.py</div><svg style="left:308.0px;top:1228.0px;" width="28" height="28" viewBox="-1 -1 113 112"><path fill="url(#pb)" d="M54.9 0C50.3 0 46 .4 42.1 1.1 30.8 3.1 28.7 7.3 28.7 15v10.2h26.8v3.4H18.7c-7.8 0-14.6 4.7-16.7 13.6-2.5 10.2-2.6 16.6 0 27.2 1.9 7.9 6.4 13.6 14.2 13.6h9.2V70.7c0-8.8 7.6-16.6 16.7-16.6h26.8c7.4 0 13.4-6.1 13.4-13.6V15c0-7.3-6.1-12.7-13.4-13.9C64.3.3 59.5 0 54.9 0zM40.4 8.2c2.8 0 5 2.3 5 5.1s-2.3 5.1-5 5.1c-2.8 0-5-2.3-5-5.1s2.3-5.1 5-5.1z"/><path fill="url(#py)" d="M85.6 28.7v11.9c0 9.2-7.8 17-16.7 17H42.1c-7.3 0-13.4 6.3-13.4 13.6v25.5c0 7.3 6.3 11.5 13.4 13.6 8.5 2.5 16.6 2.9 26.8 0 6.7-2 13.4-5.9 13.4-13.6V86.5H55.5v-3.4h40.2c7.8 0 10.7-5.4 13.4-13.6 2.8-8.4 2.7-16.5 0-27.2-1.9-7.7-5.6-13.6-13.4-13.6H85.6zM70.5 93.3c2.8 0 5 2.3 5 5.1s-2.3 5.1-5 5.1c-2.8 0-5-2.3-5-5.1s2.3-5.1 5-5.1z"/></svg><div class="t" style="top:1225.0px;height:36px;line-height:36px;font-size:26px;color:#cf7565;letter-spacing:1.20px;left:345px;">f-strings.py</div><svg style="left:308px;top:1274px;" width="30" height="12" viewBox="0 0 30 12"><path d="M2 11c2-6 8-9 13-9s10 3 12 8" fill="none" stroke="#9da0a8" stroke-width="2"/></svg><div style="left:1034px;top:120px;width:1752px;height:1166px;background:#1e1f22;"></div><div style="left:1034px;top:200.5px;width:1752px;height:1.5px;background:#393b40;"></div><svg style="left:1060.0px;top:148.0px;" width="28" height="28" viewBox="-1 -1 113 112"><path fill="url(#pb)" d="M54.9 0C50.3 0 46 .4 42.1 1.1 30.8 3.1 28.7 7.3 28.7 15v10.2h26.8v3.4H18.7c-7.8 0-14.6 4.7-16.7 13.6-2.5 10.2-2.6 16.6 0 27.2 1.9 7.9 6.4 13.6 14.2 13.6h9.2V70.7c0-8.8 7.6-16.6 16.7-16.6h26.8c7.4 0 13.4-6.1 13.4-13.6V15c0-7.3-6.1-12.7-13.4-13.9C64.3.3 59.5 0 54.9 0zM40.4 8.2c2.8 0 5 2.3 5 5.1s-2.3 5.1-5 5.1c-2.8 0-5-2.3-5-5.1s2.3-5.1 5-5.1z"/><path fill="url(#py)" d="M85.6 28.7v11.9c0 9.2-7.8 17-16.7 17H42.1c-7.3 0-13.4 6.3-13.4 13.6v25.5c0 7.3 6.3 11.5 13.4 13.6 8.5 2.5 16.6 2.9 26.8 0 6.7-2 13.4-5.9 13.4-13.6V86.5H55.5v-3.4h40.2c7.8 0 10.7-5.4 13.4-13.6 2.8-8.4 2.7-16.5 0-27.2-1.9-7.7-5.6-13.6-13.4-13.6H85.6zM70.5 93.3c2.8 0 5 2.3 5 5.1s-2.3 5.1-5 5.1c-2.8 0-5-2.3-5-5.1s2.3-5.1 5-5.1z"/></svg><div class="t" style="top:144.0px;height:36px;line-height:36px;font-size:26px;color:#b4b8bf;letter-spacing:0.79px;left:1098.5px;">test_car.py</div><svg style="left:1318.0px;top:148.0px;" width="28" height="28" viewBox="-1 -1 113 112"><path fill="url(#pb)" d="M54.9 0C50.3 0 46 .4 42.1 1.1 30.8 3.1 28.7 7.3 28.7 15v10.2h26.8v3.4H18.7c-7.8 0-14.6 4.7-16.7 13.6-2.5 10.2-2.6 16.6 0 27.2 1.9 7.9 6.4 13.6 14.2 13.6h9.2V70.7c0-8.8 7.6-16.6 16.7-16.6h26.8c7.4 0 13.4-6.1 13.4-13.6V15c0-7.3-6.1-12.7-13.4-13.9C64.3.3 59.5 0 54.9 0zM40.4 8.2c2.8 0 5 2.3 5 5.1s-2.3 5.1-5 5.1c-2.8 0-5-2.3-5-5.1s2.3-5.1 5-5.1z"/><path fill="url(#py)" d="M85.6 28.7v11.9c0 9.2-7.8 17-16.7 17H42.1c-7.3 0-13.4 6.3-13.4 13.6v25.5c0 7.3 6.3 11.5 13.4 13.6 8.5 2.5 16.6 2.9 26.8 0 6.7-2 13.4-5.9 13.4-13.6V86.5H55.5v-3.4h40.2c7.8 0 10.7-5.4 13.4-13.6 2.8-8.4 2.7-16.5 0-27.2-1.9-7.7-5.6-13.6-13.4-13.6H85.6zM70.5 93.3c2.8 0 5 2.3 5 5.1s-2.3 5.1-5 5.1c-2.8 0-5-2.3-5-5.1s2.3-5.1 5-5.1z"/></svg><div class="t" style="top:144.0px;height:36px;line-height:36px;font-size:26px;color:#6e9cc9;letter-spacing:0.86px;left:1356px;">car.py</div><svg style="left:1452px;top:153px;" width="18" height="18" viewBox="0 0 18 18"><path d="M2.500 2.500l13 13M15.500 2.500l-13 13" stroke="#868a91" stroke-width="2" stroke-linecap="round"/></svg><div style="left:1292px;top:196px;width:202px;height:6px;background:#3f74e6;border-radius:3px;"></div><div style="left:2741.8px;top:147.8px;width:4.4px;height:4.4px;background:#ced0d6;border-radius:50%;"></div><div style="left:2741.8px;top:157.8px;width:4.4px;height:4.4px;background:#ced0d6;border-radius:50%;"></div><div style="left:2741.8px;top:167.8px;width:4.4px;height:4.4px;background:#ced0d6;border-radius:50%;"></div><div style="left:1034px;top:510px;width:1752px;height:44px;background:#2a2c30;"></div><div style="left:1136px;top:422px;width:1650px;height:44px;background:#3c5f96;"></div><div style="left:1134.5px;top:202px;width:1.5px;height:1031px;background:#33363a;"></div><div style="left:1073px;top:433px;width:22px;height:22px;background:#db5c5c;border-radius:50%;"></div><div class="ln" style="top:202px;color:#4b5059">1</div><div class="code" style="top:202px"><span class="k">class</span> Car:</div><div class="ln" style="top:246px;color:#4b5059">2</div><div class="code" style="top:246px">    <span class="k">def</span> <span class="d">__init__</span>(<span class="s">self</span><span class="k">,</span> speed=<span class="n">0</span>):</div><div class="ln" style="top:290px;color:#4b5059">3</div><div class="code" style="top:290px">        <span class="s">self</span>.speed = speed</div><div class="ln" style="top:334px;color:#4b5059">4</div><div class="code" style="top:334px"></div><div class="ln" style="top:378px;color:#4b5059">5</div><div class="code" style="top:378px">    <span class="k">def</span> <span class="f">accelerate</span>(<span class="s">self</span>):</div><div class="code" style="top:422px">        <span class="s" style="color:#ab5e90">self</span><span style="color:#aeb8cf">.speed += </span><span class="n" style="color:#6e93c4">5</span></div><div class="ln" style="top:466px;color:#4b5059">7</div><div class="code" style="top:466px"></div><div class="ln" style="top:510px;color:#a1a3ab">8</div><div class="code" style="top:510px">    <span class="k">def</span> <span class="f">brake</span>(<span class="s">self</span>):</div><div class="ln" style="top:554px;color:#4b5059">9</div><div class="code" style="top:554px">        <span class="c"># self.speed -= 5</span></div><div class="ln" style="top:598px;color:#4b5059">10</div><div class="code" style="top:598px">        <span class="k">if</span> <span class="s">self</span>.speed &lt; 5:</div><div class="ln" style="top:642px;color:#4b5059">11</div><div class="code" style="top:642px">            <span class="s">self</span>.speed = 0</div><div class="ln" style="top:686px;color:#4b5059">12</div><div class="code" style="top:686px">        <span class="k">else</span>:</div><div class="ln" style="top:730px;color:#4b5059">13</div><div class="code" style="top:730px">            <span class="s">self</span>.speed -= 5</div><div class="ln" style="top:774px;color:#4b5059">14</div><div class="code" style="top:774px"></div><div class="ln" style="top:818px;color:#4b5059">15</div><div class="code" style="top:818px">    <span class="k">def</span> <span class="f">stop</span>(<span class="s">self</span>):</div><div class="ln" style="top:862px;color:#4b5059">16</div><div class="code" style="top:862px">        i = <span class="n">0</span></div><div class="ln" style="top:906px;color:#4b5059">17</div><div class="code" style="top:906px">        <span class="k">while</span> <span class="s">self</span>.speed &gt; 0:</div><div class="ln" style="top:950px;color:#4b5059">18</div><div class="code" style="top:950px">            <span class="s">self</span>.brake()</div><div class="ln" style="top:994px;color:#4b5059">19</div><div class="code" style="top:994px">            i += <span class="n">1</span></div><div class="ln" style="top:1038px;color:#4b5059">20</div><div class="code" style="top:1038px">        <span class="b">print</span>(<span class="g">f"Car has stopped after </span>{i}<span class="g"> brake calls!"</span>)</div><div class="ln" style="top:1082px;color:#4b5059">21</div><div class="code" style="top:1082px"></div><div class="code" style="top:378px;left:1580px;color:#72767e;font-style:italic">self: &lt;car.Car object at 0x103285810&gt;</div><div style="left:1200px;top:290px;width:2px;height:44px;background:#34363b;"></div><div style="left:1200px;top:422px;width:2px;height:44px;background:#34363b;"></div><div style="left:1200px;top:554px;width:2px;height:220px;background:#34363b;"></div><div style="left:1264px;top:642px;width:2px;height:44px;background:#34363b;"></div><div style="left:1264px;top:730px;width:2px;height:44px;background:#34363b;"></div><div style="left:1200px;top:862px;width:2px;height:264px;background:#34363b;"></div><div style="left:1264px;top:950px;width:2px;height:88px;background:#34363b;"></div><div style="left:1048px;top:821px;width:8px;height:40px;background:#3f68c8;border-radius:4px;"></div><div style="left:1048px;top:865px;width:8px;height:39px;background:#4a403d;border-radius:4px;"></div><div style="left:1048px;top:908px;width:8px;height:84px;background:#3f68c8;border-radius:4px;"></div><div style="left:1048px;top:996px;width:8px;height:84px;background:#4a403d;border-radius:4px;"></div><svg style="left:2745px;top:216px;" width="26" height="22" viewBox="0 0 26 22"><path d="M3 11l7 7L23 4" fill="none" stroke="#57a85a" stroke-width="4.500"/></svg><div style="left:2764px;top:258px;width:14px;height:872px;background:#434346;border-radius:7px;"></div><div style="left:2748px;top:780px;width:4px;height:188px;background:#516491;"></div><div style="left:2757px;top:443px;width:27px;height:2.5px;background:#8a7a52;"></div><div style="left:1034px;top:1232px;width:1752px;height:1.5px;background:#313438;"></div><div class="t" style="top:1239.0px;height:36px;line-height:36px;font-size:26px;color:#9da0a8;letter-spacing:0.60px;left:1054.5px;">Car</div><svg style="left:1121.0px;top:1252.5px;" width="6" height="11" viewBox="0 0 6 11"><path d="M0.9 0.9 L5.1 5.5 L0.9 10.1" fill="none" stroke="#5a5d63" stroke-width="1.8" stroke-linecap="round" stroke-linejoin="round"/></svg><div class="t" style="top:1239.0px;height:36px;line-height:36px;font-size:26px;color:#9da0a8;letter-spacing:0.60px;left:1146.5px;">brake()</div><div style="left:200px;top:1286px;width:2586px;height:2px;background:#1e1f22;"></div><svg style="left:227.0px;top:1310.0px;" width="28" height="28" viewBox="-1 -1 113 112"><path fill="url(#pb)" d="M54.9 0C50.3 0 46 .4 42.1 1.1 30.8 3.1 28.7 7.3 28.7 15v10.2h26.8v3.4H18.7c-7.8 0-14.6 4.7-16.7 13.6-2.5 10.2-2.6 16.6 0 27.2 1.9 7.9 6.4 13.6 14.2 13.6h9.2V70.7c0-8.8 7.6-16.6 16.7-16.6h26.8c7.4 0 13.4-6.1 13.4-13.6V15c0-7.3-6.1-12.7-13.4-13.9C64.3.3 59.5 0 54.9 0zM40.4 8.2c2.8 0 5 2.3 5 5.1s-2.3 5.1-5 5.1c-2.8 0-5-2.3-5-5.1s2.3-5.1 5-5.1z"/><path fill="url(#py)" d="M85.6 28.7v11.9c0 9.2-7.8 17-16.7 17H42.1c-7.3 0-13.4 6.3-13.4 13.6v25.5c0 7.3 6.3 11.5 13.4 13.6 8.5 2.5 16.6 2.9 26.8 0 6.7-2 13.4-5.9 13.4-13.6V86.5H55.5v-3.4h40.2c7.8 0 10.7-5.4 13.4-13.6 2.8-8.4 2.7-16.5 0-27.2-1.9-7.7-5.6-13.6-13.4-13.6H85.6zM70.5 93.3c2.8 0 5 2.3 5 5.1s-2.3 5.1-5 5.1c-2.8 0-5-2.3-5-5.1s2.3-5.1 5-5.1z"/></svg><div style="left:246px;top:1306px;width:14px;height:14px;background:#57a85a;border-radius:50%;border:2px solid #2b2d30;width:17px;height:17px;"></div><div class="t" style="top:1305.0px;height:36px;line-height:36px;font-size:26px;color:#dfe1e5;letter-spacing:0.10px;font-weight:700;left:266.5px;">Debug</div><div class="t" style="top:1305.0px;height:36px;line-height:36px;font-size:26px;color:#dfe1e5;letter-spacing:0.59px;left:404.8px;">Threads &amp; Variables</div><div class="t" style="top:1305.0px;height:36px;line-height:36px;font-size:26px;color:#dfe1e5;letter-spacing:0.50px;left:698.5px;">Console</div><div style="left:380px;top:1358px;width:294px;height:6px;background:#5a5d63;border-radius:3px;"></div><div style="left:200px;top:1362px;width:2586px;height:2px;background:#1e1f22;"></div><svg style="left:840px;top:1296px;" width="540" height="52" viewBox="0 0 540 52"><g fill="none" stroke="#ced0d6" stroke-width="2.4" stroke-linecap="round" stroke-linejoin="round"><path d="M29.6 20.3A11.6 11.6 0 1 0 18.0 37.4"/><path d="M30.4 13.0L30.4 21.1L22.3 21.1"/></g><g fill="none" stroke="#57a85a" stroke-width="2.2" stroke-linecap="round"><ellipse cx="29.1" cy="34.7" rx="4.6" ry="5.6"/><path d="M26.7 29.8L25.0 27.6M31.5 29.8L33.2 27.6M24.2 34.7L20.7 34.7M34.0 34.7L37.5 34.7M26.1 39.0L23.4 41.5M32.1 39.0L34.8 41.5"/></g><rect x="62.7" y="14.6" width="22.8" height="22.8" rx="3.5" fill="#5e3838" stroke="#db5c5c" stroke-width="2.4"/><path d="M106.7 6.2L106.7 45.5" stroke="#43454a" stroke-width="1.5"/><g fill="none" stroke="#ced0d6" stroke-width="2.4" stroke-linejoin="round"><rect x="126.7" y="14.9" width="7.1" height="22.2" rx="1.5"/><path d="M139.2 14.9L153.9 26.0L139.2 37.1z"/></g><g fill="none" stroke="#5a5d63" stroke-width="2.2"><rect x="182.6" y="14.9" width="7.1" height="22.2" rx="1.5"/><rect x="194.5" y="14.9" width="7.1" height="22.2" rx="1.5"/></g><g fill="none" stroke="#ced0d6" stroke-width="2.4" stroke-linecap="round" stroke-linejoin="round"><path d="M232.8 28.7L243.9 18.4L255.0 29.5"/><path d="M255.0 19.2L255.0 29.5L245.3 29.5"/><path d="M232.8 38.8L255.6 38.8"/></g><g fill="none" stroke="#ced0d6" stroke-width="2.4" stroke-linecap="round" stroke-linejoin="round"><path d="M296.0 13.5L296.0 32.0M287.8 23.8L296.0 32.0L304.1 23.8M284.6 38.8L307.4 38.8"/></g><path d="M352.9 13.0L352.9 26.0" stroke="#4a9fe0" stroke-width="4" stroke-linecap="round"/><path d="M343.4 21.9L362.4 21.9L352.9 31.4z" fill="#4a9fe0"/><g stroke="#ced0d6" stroke-width="1.8"><path d="M335.8 14.6L344.0 14.6M335.8 18.7L341.8 18.7M335.8 22.7L339.9 22.7"/></g><path d="M335.8 36.0L359.7 36.0" stroke="#b4b8bf" stroke-width="3.4"/><g fill="none" stroke="#ced0d6" stroke-width="2.4" stroke-linecap="round" stroke-linejoin="round"><path d="M399.9 32.0L399.9 14.1M391.7 22.2L399.9 14.1L408.0 22.2M388.5 38.8L411.2 38.8"/></g><path d="M432.7 6.2L432.7 45.5" stroke="#43454a" stroke-width="1.5"/><circle cx="470.4" cy="22.5" r="9.3" fill="none" stroke="#db5c5c" stroke-width="2.4"/><circle cx="463.0" cy="28.7" r="9.3" fill="#4a2828" stroke="#db5c5c" stroke-width="2.4"/><circle cx="517.8" cy="26.5" r="10.2" fill="#4a2828" stroke="#db5c5c" stroke-width="2.4"/><path d="M506.2 37.4L529.8 14.6" stroke="#ced0d6" stroke-width="2.2" stroke-linecap="round"/></svg><div style="left:204px;top:1364px;width:901px;height:56px;background:#393b40;"></div><div style="left:204px;top:1420px;width:901px;height:2px;background:#1e1f22;"></div><div style="left:222px;top:1380px;width:24px;height:24px;background:#c4622f;border-radius:50%;"></div><div class="t" style="top:1375.0px;height:36px;line-height:36px;font-size:26px;color:#dfe1e5;letter-spacing:0.57px;left:259px;">MainThread</div><svg style="left:1069.75px;top:1389.5px;" width="16.5" height="9" viewBox="0 0 16.5 9"><path d="M1.0 1.0 L8.25 8.0 L15.5 1.0" fill="none" stroke="#c4c6cc" stroke-width="2.0" stroke-linecap="round" stroke-linejoin="round"/></svg><div style="left:204px;top:1430px;width:900px;height:48px;background:#43454a;"></div><svg style="left:220px;top:1440px;" width="28" height="28" viewBox="0 0 28 28"><g fill="none" stroke="#bcbec4" stroke-width="3"><rect x="8" y="8" width="17.500" height="17.500"/><path d="M1.500 20V1.500h19"/></g></svg><div class="t" style="top:1437.0px;height:36px;line-height:36px;font-size:26px;color:#dfe1e5;letter-spacing:0.79px;left:255px;">accelerate, car.py:6</div><svg style="left:220px;top:1488px;" width="28" height="28" viewBox="0 0 28 28"><g fill="none" stroke="#bcbec4" stroke-width="3"><rect x="8" y="8" width="17.500" height="17.500"/><path d="M1.500 20V1.500h19"/></g></svg><div class="t" style="top:1485.0px;height:36px;line-height:36px;font-size:26px;color:#dfe1e5;letter-spacing:0.55px;left:255px;">drive_on_autobahn, script.py:16</div><svg style="left:220px;top:1536px;" width="28" height="28" viewBox="0 0 28 28"><g fill="none" stroke="#bcbec4" stroke-width="3"><rect x="8" y="8" width="17.500" height="17.500"/><path d="M1.500 20V1.500h19"/></g></svg><div class="t" style="top:1533.0px;height:36px;line-height:36px;font-size:26px;color:#dfe1e5;letter-spacing:0.93px;left:255px;">&lt;module&gt;, script.py:23</div><div class="t" style="top:1737.0px;height:36px;line-height:36px;font-size:26px;color:#6f737a;letter-spacing:0.58px;left:219px;">Switch frames from anywhere in the IDE with</div><div class="t" style="top:1738.0px;height:32px;line-height:32px;font-size:23px;color:#6f737a;letter-spacing:0.00px;left:773.0px;font-family:&quot;DejaVu Sans&quot;,sans-serif;-webkit-text-stroke-width:0;width:40px;text-align:center;">⌥</div><div class="t" style="top:1738.0px;height:32px;line-height:32px;font-size:23px;color:#6f737a;letter-spacing:0.00px;left:797.0px;font-family:&quot;DejaVu Sans&quot;,sans-serif;-webkit-text-stroke-width:0;width:40px;text-align:center;">⌘</div><div class="t" style="top:1738.0px;height:32px;line-height:32px;font-size:23px;color:#6f737a;letter-spacing:0.00px;left:822.0px;font-family:&quot;DejaVu Sans&quot;,sans-serif;-webkit-text-stroke-width:0;width:40px;text-align:center;">↑</div><div class="t" style="top:1738.0px;height:32px;line-height:32px;font-size:23px;color:#6f737a;letter-spacing:0.00px;left:910.0px;font-family:&quot;DejaVu Sans&quot;,sans-serif;-webkit-text-stroke-width:0;width:40px;text-align:center;">⌥</div><div class="t" style="top:1738.0px;height:32px;line-height:32px;font-size:23px;color:#6f737a;letter-spacing:0.00px;left:935.5px;font-family:&quot;DejaVu Sans&quot;,sans-serif;-webkit-text-stroke-width:0;width:40px;text-align:center;">⌘</div><div class="t" style="top:1738.0px;height:32px;line-height:32px;font-size:23px;color:#6f737a;letter-spacing:0.00px;left:960.0px;font-family:&quot;DejaVu Sans&quot;,sans-serif;-webkit-text-stroke-width:0;width:40px;text-align:center;">↓</div><div class="t" style="top:1737.0px;height:36px;line-height:36px;font-size:26px;color:#6f737a;letter-spacing:0.44px;left:863px;">and</div><svg style="left:1074px;top:1747px;" width="16" height="16" viewBox="0 0 16 16"><path d="M2 2l12 12M14 2L2 14" stroke="#9da0a8" stroke-width="1.800" stroke-linecap="round"/></svg><div style="left:1105px;top:1364px;width:2px;height:408px;background:#1e1f22;"></div><div style="left:1107px;top:1420px;width:1679px;height:2px;background:#1e1f22;"></div><div class="m" style="left:1125px;top:1371px;height:44px;line-height:45px;font-size:28px;letter-spacing:-0.8px;color:#6f737a">Evaluate expression (⏎) or add a watch (⇧⌘⏎)</div><svg style="left:1143.0px;top:1445.75px;" width="9" height="16.5" viewBox="0 0 9 16.5"><path d="M1.0 1.0 L8.0 8.25 L1.0 15.5" fill="none" stroke="#b4b8bf" stroke-width="2.0" stroke-linecap="round" stroke-linejoin="round"/></svg><div style="left:1180px;top:1442.2px;width:20px;height:5.8px;background:#a88746;"></div><div style="left:1180px;top:1450.1000000000001px;width:20px;height:5.8px;background:#a88746;"></div><div style="left:1180px;top:1458.0px;width:20px;height:5.8px;background:#a88746;"></div><div class="t" style="top:1437.0px;height:36px;line-height:36px;font-size:26px;color:#5b8df0;letter-spacing:0.64px;left:1212.5px;">self</div><div class="t" style="top:1437.0px;height:36px;line-height:36px;font-size:26px;color:#dfe1e5;letter-spacing:0.60px;left:1265.5px;">=</div><div class="t" style="top:1437.0px;height:36px;line-height:36px;font-size:26px;color:#868a91;letter-spacing:0.35px;left:1288.5px;">{Car}</div><div class="t" style="top:1437.0px;height:36px;line-height:36px;font-size:26px;color:#dfe1e5;letter-spacing:0.60px;left:1358.5px;">&lt;car.Car object at 0x103285810&gt;</div><svg style="left:2680px;top:1378px;" width="34" height="34" viewBox="0 0 34 34"><g fill="none" stroke="#6f737a" stroke-width="2.400" stroke-linecap="round"><path d="M12 3v18M3 12h18"/><circle cx="20" cy="27" r="3.500"/><circle cx="29" cy="27" r="3.500"/></g></svg><svg style="left:2747.75px;top:1389.5px;" width="16.5" height="9" viewBox="0 0 16.5 9"><path d="M1.0 1.0 L8.25 8.0 L15.5 1.0" fill="none" stroke="#c4c6cc" stroke-width="2.0" stroke-linecap="round" stroke-linejoin="round"/></svg><div style="left:2785px;top:1294px;width:1.5px;height:478px;background:#1e1f22;"></div><div style="left:120px;top:1778px;width:2746px;height:1.5px;background:#1e1f22;"></div><div style="left:148.5px;top:1800px;width:15.5px;height:15.5px;border:2px solid #5fa8c9;border-radius:3.5px;"></div><div class="t" style="top:1789.0px;height:36px;line-height:36px;font-size:26px;color:#9da0a8;letter-spacing:0.62px;left:173.5px;">MySampleProject</div><svg style="left:406.5px;top:1799.5px;" width="8" height="15" viewBox="0 0 8 15"><path d="M1.0 1.0 L7.0 7.5 L1.0 14.0" fill="none" stroke="#9da0a8" stroke-width="2" stroke-linecap="round" stroke-linejoin="round"/></svg><div class="t" style="top:1789.0px;height:36px;line-height:36px;font-size:26px;color:#9da0a8;letter-spacing:0.74px;left:436.5px;">car&amp;tests</div><svg style="left:573.0px;top:1799.5px;" width="8" height="15" viewBox="0 0 8 15"><path d="M1.0 1.0 L7.0 7.5 L1.0 14.0" fill="none" stroke="#9da0a8" stroke-width="2" stroke-linecap="round" stroke-linejoin="round"/></svg><svg style="left:604.0px;top:1791.5px;" width="29" height="29" viewBox="-1 -1 113 112"><path fill="url(#pb)" d="M54.9 0C50.3 0 46 .4 42.1 1.1 30.8 3.1 28.7 7.3 28.7 15v10.2h26.8v3.4H18.7c-7.8 0-14.6 4.7-16.7 13.6-2.5 10.2-2.6 16.6 0 27.2 1.9 7.9 6.4 13.6 14.2 13.6h9.2V70.7c0-8.8 7.6-16.6 16.7-16.6h26.8c7.4 0 13.4-6.1 13.4-13.6V15c0-7.3-6.1-12.7-13.4-13.9C64.3.3 59.5 0 54.9 0zM40.4 8.2c2.8 0 5 2.3 5 5.1s-2.3 5.1-5 5.1c-2.8 0-5-2.3-5-5.1s2.3-5.1 5-5.1z"/><path fill="url(#py)" d="M85.6 28.7v11.9c0 9.2-7.8 17-16.7 17H42.1c-7.3 0-13.4 6.3-13.4 13.6v25.5c0 7.3 6.3 11.5 13.4 13.6 8.5 2.5 16.6 2.9 26.8 0 6.7-2 13.4-5.9 13.4-13.6V86.5H55.5v-3.4h40.2c7.8 0 10.7-5.4 13.4-13.6 2.8-8.4 2.7-16.5 0-27.2-1.9-7.7-5.6-13.6-13.4-13.6H85.6zM70.5 93.3c2.8 0 5 2.3 5 5.1s-2.3 5.1-5 5.1c-2.8 0-5-2.3-5-5.1s2.3-5.1 5-5.1z"/></svg><div class="t" style="top:1789.0px;height:36px;line-height:36px;font-size:26px;color:#9da0a8;letter-spacing:0.86px;left:643px;">car.py</div><div class="t" style="top:1789.0px;height:36px;line-height:36px;font-size:26px;color:#9da0a8;letter-spacing:0.60px;right:947px;">8:21</div><div class="t" style="top:1789.0px;height:36px;line-height:36px;font-size:26px;color:#9da0a8;letter-spacing:-0.67px;left:2064px;">LF</div><div class="t" style="top:1789.0px;height:36px;line-height:36px;font-size:26px;color:#9da0a8;letter-spacing:0.87px;left:2126.5px;">UTF-8</div><div class="t" style="top:1789.0px;height:36px;line-height:36px;font-size:26px;color:#9da0a8;letter-spacing:0.72px;left:2239px;">4 spaces</div><div class="t" style="top:1789.0px;height:36px;line-height:36px;font-size:26px;color:#9da0a8;letter-spacing:0.60px;left:2382px;">Python 3.11 (MySampleProject)</div><svg style="left:2801.5px;top:1791.5px;" width="34" height="34" viewBox="0 0 34 34"><g fill="none" stroke="#ced0d6" stroke-width="2.400" stroke-linecap="round"><rect x="4" y="14" width="20" height="15" rx="3"/><path d="M17 14v-4a5.500 5.500 0 0 1 11 0v3"/><path d="M14 19.500v4"/></g></svg><svg style="left:2800px;top:130px;" width="66" height="150" viewBox="0 0 66 150"><g fill="none" stroke="#ced0d6" stroke-width="3" stroke-linecap="round" stroke-linejoin="round"><path d="M27.4 13.1C19.5 11.9 14.4 18.1 14.7 24.6L14.7 31.1L10.4 40.7L41.8 40.7L37.3 31.1L37.0 27.8"/></g><path d="M21.9 44.5L30.3 44.5C29.3 47.1 27.4 47.9 26.1 47.9C24.8 47.9 22.9 47.1 21.9 44.5z" fill="#ced0d6"/><circle cx="38.9" cy="17.1" r="7.2" fill="#db5c5c"/><g fill="none" stroke="#ced0d6" stroke-width="3"><ellipse cx="26.2" cy="99.5" rx="15.1" ry="6.4"/><path d="M11.1 99.5V121.1A15.1 6.4 0 0 0 41.3 121.1V99.5"/><path d="M11.1 106.7A15.1 6.4 0 0 0 41.3 106.7M11.1 113.9A15.1 6.4 0 0 0 41.3 113.9"/></g></svg><div class="t" style="top:290.7px;height:59px;line-height:59px;font-size:42px;color:#b2b4b8;letter-spacing:0.00px;font-weight:700;left:2807.5px;transform:scaleX(1.1);transform-origin:0 50%;">D</div><div class="gb" style="left:272px;top:40px;width:2584px;height:74px"></div><div class="gb" style="left:198px;top:120px;width:836px;height:1165.5px"></div><div class="gb" style="left:1042px;top:120px;width:1754px;height:1166px"></div><div class="gb" style="left:198px;top:1288px;width:2598px;height:490px"></div><div style="left:1058px;top:196px;width:64px;height:936px;background:rgba(108,185,108,.53);"></div><div style="left:2732px;top:192px;width:56px;height:962px;background:rgba(108,185,108,.53);"></div><div style="left:132px;top:1780px;width:624px;height:50px;background:rgba(108,185,108,.53);"></div><div style="left:2044px;top:1780px;width:750px;height:51px;background:rgba(108,185,108,.53);"></div><div style="left:1410px;top:38px;width:80px;height:80px;background:#6cb96c;border-radius:50%;"></div><div class="t" style="top:44.1px;height:71px;line-height:71px;font-size:51px;color:#fff;letter-spacing:0.00px;left:1420px;width:60px;text-align:center;">1</div><div style="left:621.5px;top:408px;width:80px;height:80px;background:#6cb96c;border-radius:50%;"></div><div class="t" style="top:414.1px;height:71px;line-height:71px;font-size:51px;color:#fff;letter-spacing:0.00px;left:631.5px;width:60px;text-align:center;">2</div><div style="left:1852px;top:215px;width:80px;height:80px;background:#6cb96c;border-radius:50%;"></div><div class="t" style="top:221.1px;height:71px;line-height:71px;font-size:51px;color:#fff;letter-spacing:0.00px;left:1862px;width:60px;text-align:center;">3</div><svg style="left:760.3px;top:1665px;" width="101.3" height="105.8" viewBox="0 0 101.3 105.8"><circle cx="58.3" cy="43.0" r="41" fill="#6cb96c"/><path d="M20.6 26.9Q5.0 63.3 2.0 103.8Q42.2 97.6 77.3 79.4z" fill="#6cb96c"/></svg><div class="t" style="top:1676.9px;height:71px;line-height:71px;font-size:51px;color:#fff;letter-spacing:0.00px;left:785.5425555681754px;width:60px;text-align:center;">5</div><svg style="left:1125.1px;top:1131.3px;" width="102.1" height="106.8" viewBox="0 0 102.1 106.8"><circle cx="59.1" cy="63.8" r="41" fill="#6cb96c"/><path d="M78.4 27.6Q42.9 8.7 2.0 2.0Q5.4 43.3 21.5 80.2z" fill="#6cb96c"/></svg><div class="t" style="top:1157.4px;height:71px;line-height:71px;font-size:51px;color:#fff;letter-spacing:0.00px;left:1151.1461849708323px;width:60px;text-align:center;">6</div><svg style="left:2645.8px;top:1158.6px;" width="86.7" height="119.6" viewBox="0 0 86.7 119.6"><circle cx="43.0" cy="76.6" r="41" fill="#6cb96c"/><path d="M83.3 84.1Q90.8 43.7 84.7 2.0Q45.9 18.7 15.5 46.2z" fill="#6cb96c"/></svg><div class="t" style="top:1196.9px;height:71px;line-height:71px;font-size:51px;color:#fff;letter-spacing:0.00px;left:2660.995668139263px;width:60px;text-align:center;">7</div><svg style="left:66.1px;top:1276px;" width="129.6" height="86" viewBox="0 0 129.6 86"><circle cx="43.0" cy="43.0" r="41" fill="#6cb96c"/><path d="M56.3 81.8Q94.7 68.6 127.6 43.0Q94.7 17.4 56.3 4.2z" fill="#6cb96c"/></svg><div class="t" style="top:1284.6px;height:71px;line-height:71px;font-size:51px;color:#fff;letter-spacing:0.00px;left:83.6px;width:60px;text-align:center;">8</div><svg style="left:2389px;top:1646.8px;" width="86" height="127.0" viewBox="0 0 86 127.0"><circle cx="43.0" cy="43.0" r="41" fill="#6cb96c"/><path d="M4.5 57.1Q17.9 93.8 43.1 125.0Q68.2 93.7 81.5 57.0z" fill="#6cb96c"/></svg><div class="t" style="top:1659.9px;height:71px;line-height:71px;font-size:51px;color:#fff;letter-spacing:0.00px;left:2402.0054878007973px;width:60px;text-align:center;">9</div><div style="left:1392px;top:552px;width:627px;height:1609px;background:#2b2d30;border-radius:18px;border:1.5px solid #45474d;box-shadow:0 12px 32px rgba(0,0,0,.36),0 1px 6px rgba(0,0,0,.25);"></div><svg style="left:1418px;top:574.5px;" width="28" height="32" viewBox="0 0 28 32"><g fill="none" stroke="#ced0d6" stroke-width="2.200" stroke-linecap="round"><path d="M9.500 22c0-3-4.500-5-4.500-11a9 9 0 0 1 18 0c0 6-4.500 8-4.500 11z"/><path d="M10 26.500h8M11.500 30h5"/></g></svg><div class="t" style="top:572.8px;height:36px;line-height:36px;font-size:26px;color:#dfe1e5;letter-spacing:1.00px;left:1459px;">Show Context Actions</div><div class="t" style="top:572.8px;height:36px;line-height:36px;font-size:26px;color:#868a91;letter-spacing:0.50px;right:984.5px;font-family:&quot;Liberation Sans&quot;,&quot;DejaVu Sans&quot;,sans-serif;">⌥↵</div><div style="left:1414.5px;top:624.6px;width:583px;height:2px;background:#43454a;"></div><svg style="left:1418px;top:644.75px;" width="28" height="32" viewBox="0 0 28 32"><g fill="none" stroke="#ced0d6" stroke-width="2.200" stroke-linecap="round"><rect x="2.500" y="5.500" width="23" height="24" rx="3.500"/><rect x="9" y="2" width="10" height="6" rx="1.500" fill="#2b2d30"/><path d="M8.500 14h11M8.500 19h11M8.500 24h11"/></g></svg><div class="t" style="top:643.0px;height:36px;line-height:36px;font-size:26px;color:#dfe1e5;letter-spacing:0.42px;left:1459px;">Paste</div><div class="t" style="top:643.0px;height:36px;line-height:36px;font-size:26px;color:#868a91;letter-spacing:0.50px;right:984.5px;font-family:&quot;Liberation Sans&quot;,&quot;DejaVu Sans&quot;,sans-serif;">⌘V</div><div class="t" style="top:695.0px;height:36px;line-height:36px;font-size:26px;color:#dfe1e5;letter-spacing:0.66px;left:1459px;">Copy / Paste Special</div><svg style="left:1977.5px;top:706.25px;" width="8" height="15" viewBox="0 0 8 15"><path d="M1.1 1.1 L6.9 7.5 L1.1 13.9" fill="none" stroke="#ced0d6" stroke-width="2.2" stroke-linecap="round" stroke-linejoin="round"/></svg><div class="t" style="top:747.0px;height:36px;line-height:36px;font-size:26px;color:#dfe1e5;letter-spacing:0.78px;left:1459px;">Column Selection Mode</div><div class="t" style="top:747.0px;height:36px;line-height:36px;font-size:26px;color:#868a91;letter-spacing:0.50px;right:984.5px;font-family:&quot;Liberation Sans&quot;,&quot;DejaVu Sans&quot;,sans-serif;">⇧⌘8</div><div style="left:1414.5px;top:798.85px;width:583px;height:2px;background:#43454a;"></div><div class="t" style="top:817.3px;height:36px;line-height:36px;font-size:26px;color:#dfe1e5;letter-spacing:0.61px;left:1459px;">Find Usages</div><div class="t" style="top:817.3px;height:36px;line-height:36px;font-size:26px;color:#868a91;letter-spacing:0.50px;right:984.5px;font-family:&quot;Liberation Sans&quot;,&quot;DejaVu Sans&quot;,sans-serif;">⌥F7</div><div class="t" style="top:869.3px;height:36px;line-height:36px;font-size:26px;color:#dfe1e5;letter-spacing:1.14px;left:1459px;">Go To</div><svg style="left:1977.5px;top:880.5px;" width="8" height="15" viewBox="0 0 8 15"><path d="M1.1 1.1 L6.9 7.5 L1.1 13.9" fill="none" stroke="#ced0d6" stroke-width="2.2" stroke-linecap="round" stroke-linejoin="round"/></svg><div style="left:1414.5px;top:921.1px;width:583px;height:2px;background:#43454a;"></div><div class="t" style="top:939.5px;height:36px;line-height:36px;font-size:26px;color:#dfe1e5;letter-spacing:0.60px;left:1459px;">Folding</div><svg style="left:1977.5px;top:950.75px;" width="8" height="15" viewBox="0 0 8 15"><path d="M1.1 1.1 L6.9 7.5 L1.1 13.9" fill="none" stroke="#ced0d6" stroke-width="2.2" stroke-linecap="round" stroke-linejoin="round"/></svg><div style="left:1414.5px;top:991.35px;width:583px;height:2px;background:#43454a;"></div><div class="t" style="top:1009.8px;height:36px;line-height:36px;font-size:26px;color:#dfe1e5;letter-spacing:0.89px;left:1459px;">Refactor</div><svg style="left:1977.5px;top:1021.0px;" width="8" height="15" viewBox="0 0 8 15"><path d="M1.1 1.1 L6.9 7.5 L1.1 13.9" fill="none" stroke="#ced0d6" stroke-width="2.2" stroke-linecap="round" stroke-linejoin="round"/></svg><div class="t" style="top:1061.8px;height:36px;line-height:36px;font-size:26px;color:#dfe1e5;letter-spacing:0.48px;left:1459px;">Generate...</div><div class="t" style="top:1061.8px;height:36px;line-height:36px;font-size:26px;color:#868a91;letter-spacing:0.50px;right:984.5px;font-family:&quot;Liberation Sans&quot;,&quot;DejaVu Sans&quot;,sans-serif;">⌘N</div><div style="left:1414.5px;top:1113.6px;width:583px;height:2px;background:#43454a;"></div><svg style="left:1418px;top:1135.75px;" width="28" height="28" viewBox="0 0 28 28"><g fill="none" stroke="#ced0d6" stroke-width="2.200"><rect x="2.500" y="2.500" width="23" height="23" rx="3.500"/><path d="M6.500 9h15"/></g><g fill="#ced0d6"><circle cx="8.500" cy="15" r="1.600"/><circle cx="14" cy="15" r="1.600"/><circle cx="19.500" cy="15" r="1.600"/><circle cx="8.500" cy="20.500" r="1.600"/><circle cx="14" cy="20.500" r="1.600"/><circle cx="19.500" cy="20.500" r="1.600"/></g></svg><div class="t" style="top:1132.0px;height:36px;line-height:36px;font-size:26px;color:#dfe1e5;letter-spacing:0.45px;left:1459px;">Evaluate Expression...</div><div class="t" style="top:1132.0px;height:36px;line-height:36px;font-size:26px;color:#868a91;letter-spacing:0.50px;right:984.5px;font-family:&quot;Liberation Sans&quot;,&quot;DejaVu Sans&quot;,sans-serif;">⌥F8</div><svg style="left:1417px;top:1186.75px;" width="32" height="32" viewBox="0 0 32 32"><g fill="none" stroke="#ced0d6" stroke-width="2.200" stroke-linecap="round" stroke-linejoin="round"><path d="M2.500 3l10.500 10.500M13.500 5.500v8.500H5"/></g><g fill="none" stroke="#5c92e6" stroke-width="1.800" stroke-linecap="round"><path d="M24 13.500v14M20.500 12.500c2 0 3.500.500 3.500 1.500 0-1 1.500-1.500 3.500-1.500M20.500 28.500c2 0 3.500-.500 3.500-1.500 0 1 1.500 1.500 3.500 1.500"/></g></svg><div class="t" style="top:1184.0px;height:36px;line-height:36px;font-size:26px;color:#dfe1e5;letter-spacing:0.55px;left:1459px;">Run to Cursor</div><div class="t" style="top:1184.0px;height:36px;line-height:36px;font-size:26px;color:#868a91;letter-spacing:0.50px;right:984.5px;font-family:&quot;Liberation Sans&quot;,&quot;DejaVu Sans&quot;,sans-serif;">⌥F9</div><svg style="left:1417px;top:1238.75px;" width="32" height="32" viewBox="0 0 32 32"><g fill="none" stroke="#db5c5c" stroke-width="2.200" stroke-linecap="round" stroke-linejoin="round"><path d="M2.500 3l10.500 10.500M13.500 5.500v8.500H5"/></g><g fill="none" stroke="#ced0d6" stroke-width="1.800" stroke-linecap="round"><path d="M24 13.500v14M20.500 12.500c2 0 3.500.500 3.500 1.500 0-1 1.500-1.500 3.500-1.500M20.500 28.500c2 0 3.500-.500 3.500-1.500 0 1 1.500 1.500 3.500 1.500"/></g></svg><div class="t" style="top:1236.0px;height:36px;line-height:36px;font-size:26px;color:#dfe1e5;letter-spacing:0.60px;left:1459px;">Force Run to Cursor</div><div class="t" style="top:1236.0px;height:36px;line-height:36px;font-size:26px;color:#868a91;letter-spacing:0.50px;right:984.5px;font-family:&quot;Liberation Sans&quot;,&quot;DejaVu Sans&quot;,sans-serif;">⌥⌘F9</div><div class="t" style="top:1288.0px;height:36px;line-height:36px;font-size:26px;color:#dfe1e5;letter-spacing:1.03px;left:1459px;">Jump To Cursor</div><svg style="left:1419px;top:1342.75px;" width="32" height="32" viewBox="0 0 32 32"><g fill="none" stroke="#ced0d6" stroke-width="2.400" stroke-linecap="round"><path d="M11 3v17M2.500 11.500h17"/></g><g fill="none" stroke="#ced0d6" stroke-width="1.800"><circle cx="15.500" cy="25.500" r="3"/><circle cx="24.500" cy="25.500" r="3"/><path d="M18.500 25.500h3"/></g></svg><div class="t" style="top:1340.0px;height:36px;line-height:36px;font-size:26px;color:#dfe1e5;letter-spacing:1.02px;left:1459px;">Add to Watches</div><svg style="left:1419px;top:1394.75px;" width="32" height="32" viewBox="0 0 32 32"><g fill="none" stroke="#ced0d6" stroke-width="2.400" stroke-linecap="round"><path d="M11 3v17M2.500 11.500h17"/></g><g fill="none" stroke="#ced0d6" stroke-width="1.800"><circle cx="15.500" cy="25.500" r="3"/><circle cx="24.500" cy="25.500" r="3"/><path d="M18.500 25.500h3"/></g></svg><div class="t" style="top:1392.0px;height:36px;line-height:36px;font-size:26px;color:#dfe1e5;letter-spacing:0.78px;left:1459px;">Add Inline Watch</div><div style="left:1414.5px;top:1443.85px;width:583px;height:2px;background:#43454a;"></div><svg style="left:1418px;top:1465.0px;" width="30" height="30" viewBox="0 0 30 30"><path d="M4.500 3.500L25 15 4.500 26.500z" fill="#263a29" stroke="#57a85a" stroke-width="2.200" stroke-linejoin="round"/></svg><div class="t" style="top:1462.3px;height:36px;line-height:36px;font-size:26px;color:#dfe1e5;letter-spacing:0.32px;left:1459px;">Run 'car'</div><div class="t" style="top:1462.3px;height:36px;line-height:36px;font-size:26px;color:#868a91;letter-spacing:0.50px;right:984.5px;font-family:&quot;Liberation Sans&quot;,&quot;DejaVu Sans&quot;,sans-serif;">^⇧R</div><svg style="left:1416px;top:1516.0px;" width="32" height="32" viewBox="0 0 32 32"><g fill="none" stroke="#57a85a" stroke-width="2.200" stroke-linecap="round"><ellipse cx="16" cy="18.500" rx="7" ry="9" fill="#263a29"/><path d="M11.500 11.500c0-3.500 2-5.500 4.500-5.500s4.500 2 4.500 5.500M9 18.500H2.500M23 18.500h6.500M10 13L5 9M22 13l5-4M10.500 24.500L5.500 29M21.500 24.500l5 4.500"/></g></svg><div class="t" style="top:1514.3px;height:36px;line-height:36px;font-size:26px;color:#dfe1e5;letter-spacing:0.77px;left:1459px;">Debug 'car'</div><div class="t" style="top:1514.3px;height:36px;line-height:36px;font-size:26px;color:#868a91;letter-spacing:0.50px;right:984.5px;font-family:&quot;Liberation Sans&quot;,&quot;DejaVu Sans&quot;,sans-serif;">^⇧D</div><div class="t" style="top:1566.3px;height:36px;line-height:36px;font-size:26px;color:#dfe1e5;letter-spacing:0.68px;left:1459px;">More Run/Debug</div><svg style="left:1977.5px;top:1577.5px;" width="8" height="15" viewBox="0 0 8 15"><path d="M1.1 1.1 L6.9 7.5 L1.1 13.9" fill="none" stroke="#ced0d6" stroke-width="2.2" stroke-linecap="round" stroke-linejoin="round"/></svg><div style="left:1414.5px;top:1618.1px;width:583px;height:2px;background:#43454a;"></div><div class="t" style="top:1636.5px;height:36px;line-height:36px;font-size:26px;color:#dfe1e5;letter-spacing:0.67px;left:1459px;">Open in Split with Chooser...</div><div class="t" style="top:1636.5px;height:36px;line-height:36px;font-size:26px;color:#868a91;letter-spacing:0.50px;right:984.5px;font-family:&quot;Liberation Sans&quot;,&quot;DejaVu Sans&quot;,sans-serif;">⌥⇧↵</div><div class="t" style="top:1688.5px;height:36px;line-height:36px;font-size:26px;color:#dfe1e5;letter-spacing:0.21px;left:1459px;">Open In</div><svg style="left:1977.5px;top:1699.75px;" width="8" height="15" viewBox="0 0 8 15"><path d="M1.1 1.1 L6.9 7.5 L1.1 13.9" fill="none" stroke="#ced0d6" stroke-width="2.2" stroke-linecap="round" stroke-linejoin="round"/></svg><div style="left:1414.5px;top:1740.35px;width:583px;height:2px;background:#43454a;"></div><div class="t" style="top:1758.8px;height:36px;line-height:36px;font-size:26px;color:#dfe1e5;letter-spacing:0.75px;left:1459px;">Local History</div><svg style="left:1977.5px;top:1770.0px;" width="8" height="15" viewBox="0 0 8 15"><path d="M1.1 1.1 L6.9 7.5 L1.1 13.9" fill="none" stroke="#ced0d6" stroke-width="2.2" stroke-linecap="round" stroke-linejoin="round"/></svg><div class="t" style="top:1810.8px;height:36px;line-height:36px;font-size:26px;color:#dfe1e5;letter-spacing:0.09px;left:1459px;">Git</div><svg style="left:1977.5px;top:1822.0px;" width="8" height="15" viewBox="0 0 8 15"><path d="M1.1 1.1 L6.9 7.5 L1.1 13.9" fill="none" stroke="#ced0d6" stroke-width="2.2" stroke-linecap="round" stroke-linejoin="round"/></svg><div style="left:1414.5px;top:1862.6px;width:583px;height:2px;background:#43454a;"></div><div class="t" style="top:1881.0px;height:36px;line-height:36px;font-size:26px;color:#dfe1e5;letter-spacing:0.62px;left:1459px;">Execute Line in Python Console</div><div class="t" style="top:1881.0px;height:36px;line-height:36px;font-size:26px;color:#868a91;letter-spacing:0.50px;right:984.5px;font-family:&quot;Liberation Sans&quot;,&quot;DejaVu Sans&quot;,sans-serif;">⌥⇧E</div><svg style="left:1417.0px;top:1935.8px;" width="30" height="30" viewBox="-1 -1 113 112"><path fill="url(#pb)" d="M54.9 0C50.3 0 46 .4 42.1 1.1 30.8 3.1 28.7 7.3 28.7 15v10.2h26.8v3.4H18.7c-7.8 0-14.6 4.7-16.7 13.6-2.5 10.2-2.6 16.6 0 27.2 1.9 7.9 6.4 13.6 14.2 13.6h9.2V70.7c0-8.8 7.6-16.6 16.7-16.6h26.8c7.4 0 13.4-6.1 13.4-13.6V15c0-7.3-6.1-12.7-13.4-13.9C64.3.3 59.5 0 54.9 0zM40.4 8.2c2.8 0 5 2.3 5 5.1s-2.3 5.1-5 5.1c-2.8 0-5-2.3-5-5.1s2.3-5.1 5-5.1z"/><path fill="url(#py)" d="M85.6 28.7v11.9c0 9.2-7.8 17-16.7 17H42.1c-7.3 0-13.4 6.3-13.4 13.6v25.5c0 7.3 6.3 11.5 13.4 13.6 8.5 2.5 16.6 2.9 26.8 0 6.7-2 13.4-5.9 13.4-13.6V86.5H55.5v-3.4h40.2c7.8 0 10.7-5.4 13.4-13.6 2.8-8.4 2.7-16.5 0-27.2-1.9-7.7-5.6-13.6-13.4-13.6H85.6zM70.5 93.3c2.8 0 5 2.3 5 5.1s-2.3 5.1-5 5.1c-2.8 0-5-2.3-5-5.1s2.3-5.1 5-5.1z"/></svg><div class="t" style="top:1933.0px;height:36px;line-height:36px;font-size:26px;color:#dfe1e5;letter-spacing:0.47px;left:1459px;">Run File in Python Console</div><svg style="left:1416px;top:1986.75px;" width="34" height="34" viewBox="0 0 34 34"><g fill="none" stroke="#9da0a8" stroke-width="2.400"><path d="M11 5H3v22h8"/><rect x="8" y="2.500" width="10" height="5" fill="#9da0a8"/></g><path d="M13 17h7v-5l11 7-11 7v-5h-7z" fill="#4a9fe0" transform="rotate(-20 20 19)"/><path d="M12 24l7 2-3 6z" fill="#4a9fe0"/></svg><div class="t" style="top:1985.0px;height:36px;line-height:36px;font-size:26px;color:#dfe1e5;letter-spacing:0.82px;left:1459px;">Compare with Clipboard</div><div style="left:1414.5px;top:2036.85px;width:583px;height:2px;background:#43454a;"></div><div class="t" style="top:2055.3px;height:36px;line-height:36px;font-size:26px;color:#dfe1e5;letter-spacing:0.47px;left:1459px;">Diagrams</div><svg style="left:1977.5px;top:2066.5px;" width="8" height="15" viewBox="0 0 8 15"><path d="M1.1 1.1 L6.9 7.5 L1.1 13.9" fill="none" stroke="#ced0d6" stroke-width="2.2" stroke-linecap="round" stroke-linejoin="round"/></svg><svg style="left:1417px;top:2110.0px;" width="30" height="30" viewBox="0 0 16 16"><path fill="#dfe1e5" fill-rule="evenodd" d="M8 0C3.580 0 0 3.580 0 8c0 3.540 2.290 6.530 5.470 7.590.400.070.550-.170.550-.380 0-.190-.010-.820-.010-1.490-2.010.370-2.530-.490-2.690-.940-.090-.230-.480-.940-.820-1.130-.280-.150-.680-.520-.010-.530.630-.010 1.080.580 1.230.820.720 1.210 1.870.870 2.330.660.070-.520.280-.870.510-1.070-1.780-.200-3.640-.890-3.640-3.950 0-.870.310-1.590.820-2.150-.080-.200-.360-1.020.080-2.120 0 0 .670-.210 2.200.820.640-.180 1.320-.270 2-.270s1.360.090 2 .270c1.530-1.040 2.200-.820 2.200-.820.440 1.100.160 1.920.080 2.120.510.560.820 1.270.820 2.150 0 3.070-1.870 3.750-3.650 3.950.290.250.540.730.540 1.480 0 1.070-.010 1.930-.010 2.200 0 .210.150.460.550.380A8.013 8.013 0 0 0 16 8c0-4.420-3.580-8-8-8z"/></svg><div class="t" style="top:2107.3px;height:36px;line-height:36px;font-size:26px;color:#dfe1e5;letter-spacing:0.49px;left:1459px;">Create Gist...</div><div class="gb" style="left:1397px;top:562px;width:620px;height:1590px"></div><div style="left:1665.5px;top:862px;width:80px;height:80px;background:#6cb96c;border-radius:50%;"></div><div class="t" style="top:868.1px;height:71px;line-height:71px;font-size:51px;color:#fff;letter-spacing:0.00px;left:1675.5px;width:60px;text-align:center;">4</div></div></body></html>
